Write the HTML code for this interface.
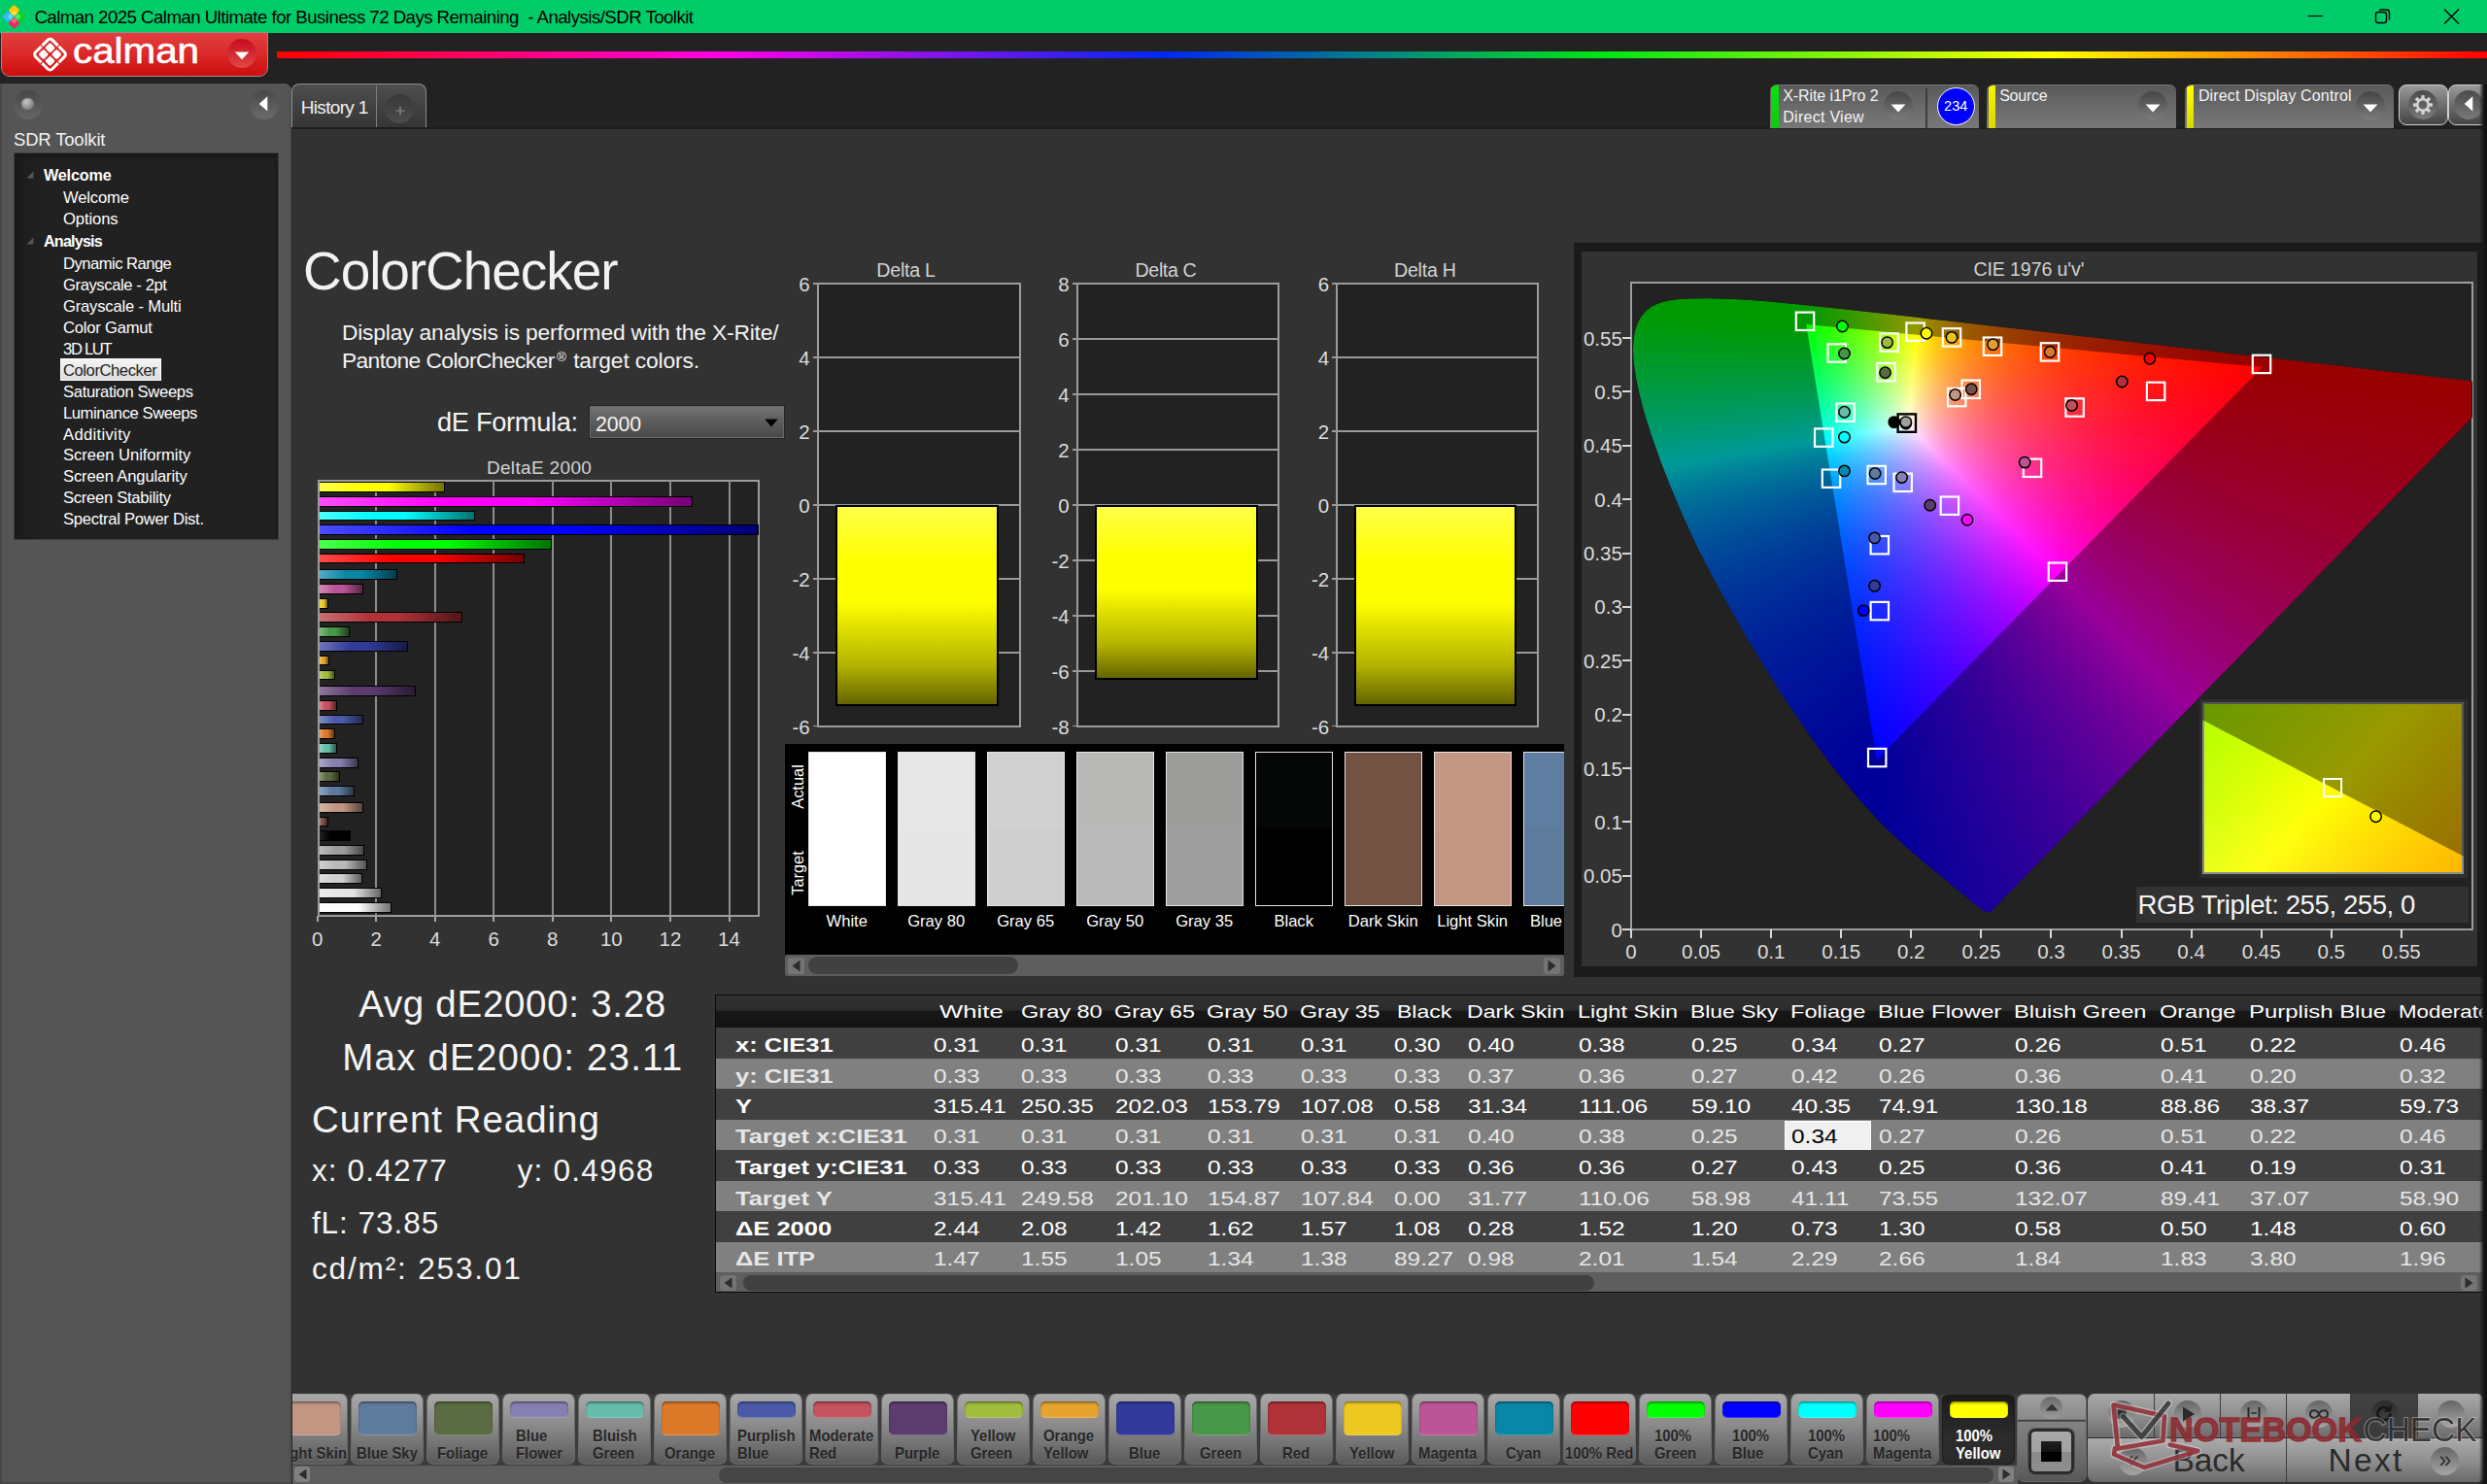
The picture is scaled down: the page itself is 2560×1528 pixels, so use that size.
<!DOCTYPE html>
<html lang="en"><head><meta charset="utf-8"><title>Calman 2025 - Analysis/SDR Toolkit</title>
<style>
html,body{margin:0;padding:0}
body{width:2560px;height:1528px;overflow:hidden;position:relative;background:#323232;font-family:"Liberation Sans",sans-serif;color:#f0f0f0}
span{position:absolute;white-space:nowrap}
div{position:absolute;box-sizing:border-box}
.cie i{position:absolute;left:0;width:100%;height:3px}
</style></head>
<body>
<!-- top -->
<div style="left:0;top:0;width:2560px;height:34px;background:#00cc6a"></div>
<svg style="position:absolute;left:0px;top:3px" width="29" height="29" viewBox="0 0 27 27">
<g stroke-linejoin="round"><rect x="-4" y="-4" width="8" height="8" rx="1.5" transform="translate(13.5,7.2) rotate(45)" fill="#ffc800"/>
<rect x="-4" y="-4" width="8" height="8" rx="1.5" transform="translate(7.3,13.2) rotate(45)" fill="#30b8f8"/>
<rect x="-4" y="-4" width="8" height="8" rx="1.5" transform="translate(19.7,13.2) rotate(45)" fill="#10d020"/>
<rect x="-4" y="-4" width="8" height="8" rx="1.5" transform="translate(13.5,19.4) rotate(45)" fill="#f02860"/>
<rect x="-2.2" y="-2.2" width="4.4" height="4.4" transform="translate(13.5,9.5) rotate(45)" fill="#ffdc50"/>
<rect x="-2.2" y="-2.2" width="4.4" height="4.4" transform="translate(9.8,13.2) rotate(45)" fill="#70d0ff"/>
<rect x="-2.2" y="-2.2" width="4.4" height="4.4" transform="translate(17.2,13.2) rotate(45)" fill="#50e860"/>
<rect x="-2.2" y="-2.2" width="4.4" height="4.4" transform="translate(13.5,17) rotate(45)" fill="#ff6088"/></g></svg>
<span style="left:35.4px;top:7.1px;font-size:18.6px;line-height:22px;letter-spacing:-0.51px;color:#000;white-space:pre;">Calman 2025 Calman Ultimate for Business 72 Days Remaining  - Analysis/SDR Toolkit</span>
<svg style="position:absolute;left:2360px;top:0" width="200" height="34" viewBox="0 0 200 34" fill="none" stroke="#000" stroke-width="1.4">
<path d="M15.5 16.5h15.5" stroke-width="1.15"/><rect x="85.5" y="12.5" width="11" height="11" rx="2.5"/><path d="M89 10h7.5a3 3 0 0 1 3 3v7.5"/><path d="M156 9.5l15 15m0-15l-15 15"/></svg>
<div style="left:0;top:34px;width:2560px;height:99px;background:#222"></div>
<div style="left:1px;top:33px;width:274.5px;height:46px;border-radius:0 0 9px 9px;border:1.3px solid #9a8c8c;background:linear-gradient(#e04040,#dc2828 50%,#cc0e0e)"></div>
<svg style="position:absolute;left:31.2px;top:34.8px" width="41" height="41" viewBox="0 0 38 38"><g transform="translate(19,19.5) rotate(45)"><rect x="-11.3" y="-11.3" width="22.6" height="22.6" rx="3" fill="none" stroke="#fff" stroke-width="2.8"/>
<g fill="#fff"><rect x="-8" y="-8" width="7.1" height="7.1" rx="1.6"/><rect x="0.9" y="-8" width="7.1" height="7.1" rx="1.6"/><rect x="-8" y="0.9" width="7.1" height="7.1" rx="1.6"/><rect x="0.9" y="0.9" width="7.1" height="7.1" rx="1.6"/></g>
<path d="M0 -14v5M0 9v5M-14 0h5M9 0h5" stroke="#d92428" stroke-width="1.1"/></g></svg>
<span style="left:74.5px;top:31.3px;font-size:36px;line-height:43px;transform:scaleX(1.120);transform-origin:0 0;color:#fff;-webkit-text-stroke:0.6px #fff;">calman</span>
<div style="left:234px;top:40px;width:30px;height:30px;border-radius:15px;background:linear-gradient(#c40c1c,#e24848)"></div>
<svg style="position:absolute;left:241px;top:53px" width="16" height="9" viewBox="0 0 16 9"><path d="M0.8 0.5h14.4l-7.2 7.8z" fill="#fff"/></svg>
<div style="left:285px;top:52.8px;width:2275px;height:7.3px;background:linear-gradient(90deg,#f00 0%,#ff00e6 20%,#0028f0 40.2%,#00e614 60%,#ff0 80.2%,#f00 100%)"></div>
<div style="left:0;top:86px;width:300px;height:1442px;background:#555;border-radius:0 7px 0 0;border-left:2px solid #484848;border-bottom:2.5px solid #484848"></div><div style="left:298px;top:94px;width:1px;height:1434px;background:#484848"></div>
<div style="left:13.5px;top:93px;width:30px;height:30px;border-radius:15px;background:linear-gradient(#484848,#666)"></div>
<div style="left:22px;top:100.5px;width:12.5px;height:12.5px;border-radius:7px;background:radial-gradient(circle at 40% 35%,#c8c8c8,#8a8a8a 60%,#666)"></div>
<div style="left:256.5px;top:93px;width:30px;height:30px;border-radius:15px;background:linear-gradient(#484848,#6c6c6c)"></div>
<svg style="position:absolute;left:266px;top:99px" width="10" height="16" viewBox="0 0 10 16"><path d="M9.3 0.3v15.2l-8.6-7.6z" fill="#fff"/></svg>
<span style="left:14.0px;top:133.2px;font-size:18.5px;line-height:22px;letter-spacing:-0.18px;color:#f2f2f2;">SDR Toolkit</span>
<div style="left:14px;top:157px;width:273px;height:399px;background:linear-gradient(90deg,#1b1b1b,#212121 30px);border:1px solid #3e3e3e;box-shadow:inset 0 3px 4px #161616"></div>
<div style="left:61.5px;top:369px;width:104px;height:22.5px;background:linear-gradient(#f4f4f4,#dcdcdc);border:1px solid #fff"></div>
<span style="left:45.0px;top:170.7px;font-size:16.2px;line-height:19px;letter-spacing:-0.19px;color:#fff;font-weight:bold;">Welcome</span>
<span style="left:65.0px;top:193.7px;font-size:16.6px;line-height:20px;letter-spacing:-0.15px;color:#fff;">Welcome</span>
<span style="left:65.0px;top:215.6px;font-size:16.6px;line-height:20px;letter-spacing:-0.10px;color:#fff;">Options</span>
<span style="left:45.0px;top:238.5px;font-size:16.2px;line-height:19px;letter-spacing:-0.83px;color:#fff;font-weight:bold;">Analysis</span>
<span style="left:65.0px;top:261.8px;font-size:16.6px;line-height:20px;letter-spacing:-0.52px;color:#fff;">Dynamic Range</span>
<span style="left:65.0px;top:283.8px;font-size:16.6px;line-height:20px;letter-spacing:-0.40px;color:#fff;">Grayscale - 2pt</span>
<span style="left:65.0px;top:305.8px;font-size:16.6px;line-height:20px;letter-spacing:-0.18px;color:#fff;">Grayscale - Multi</span>
<span style="left:65.0px;top:327.8px;font-size:16.6px;line-height:20px;letter-spacing:-0.21px;color:#fff;">Color Gamut</span>
<span style="left:65.0px;top:349.7px;font-size:16.6px;line-height:20px;letter-spacing:-1.30px;color:#fff;">3D LUT</span>
<span style="left:65.0px;top:371.6px;font-size:16.6px;line-height:20px;letter-spacing:-0.43px;color:#222;">ColorChecker</span>
<span style="left:65.0px;top:393.6px;font-size:16.6px;line-height:20px;letter-spacing:-0.33px;color:#fff;">Saturation Sweeps</span>
<span style="left:65.0px;top:415.5px;font-size:16.6px;line-height:20px;letter-spacing:-0.43px;color:#fff;">Luminance Sweeps</span>
<span style="left:65.0px;top:437.5px;font-size:16.6px;line-height:20px;letter-spacing:0.33px;color:#fff;">Additivity</span>
<span style="left:65.0px;top:459.4px;font-size:16.6px;line-height:20px;letter-spacing:-0.03px;color:#fff;">Screen Uniformity</span>
<span style="left:65.0px;top:481.3px;font-size:16.6px;line-height:20px;letter-spacing:-0.14px;color:#fff;">Screen Angularity</span>
<span style="left:65.0px;top:503.3px;font-size:16.6px;line-height:20px;letter-spacing:-0.28px;color:#fff;">Screen Stability</span>
<span style="left:65.0px;top:525.2px;font-size:16.6px;line-height:20px;letter-spacing:-0.28px;color:#fff;">Spectral Power Dist.</span>
<svg style="position:absolute;left:27px;top:176.0px" width="8" height="8" viewBox="0 0 8 8"><path d="M7.5 0.5v7h-7z" fill="#565656"/></svg>
<svg style="position:absolute;left:27px;top:244.0px" width="8" height="8" viewBox="0 0 8 8"><path d="M7.5 0.5v7h-7z" fill="#565656"/></svg>
<div style="left:300px;top:86px;width:139px;height:47px;border:1.5px solid #8c8c8c;border-bottom:none;border-radius:8px 8px 0 0;background:linear-gradient(#4e4e4e,#343434)"></div>
<div style="left:387px;top:88px;width:1.2px;height:44px;background:#808080"></div>
<span style="left:309.7px;top:98.9px;font-size:19px;line-height:23px;letter-spacing:-0.66px;color:#f0f0f0;">History 1</span>
<div style="left:396px;top:97px;width:30px;height:30px;border-radius:15px;background:linear-gradient(#383838,#4c4c4c)"></div>
<svg style="position:absolute;left:406.5px;top:108.5px" width="10" height="10" viewBox="0 0 10 10"><path d="M5 0.5v9M0.5 5h9" stroke="#8e8e8e" stroke-width="1.2"/></svg>
<div style="left:300px;top:131px;width:2260px;height:1397px;background:#323232;border-top:2px solid #1c1c1c;border-left:1px solid #222"></div>
<div style="left:1821.5px;top:86.5px;width:215.0px;height:45px;border-radius:7px 7px 0 0;background:linear-gradient(#5a5a5a,#6a6a6a 50%,#787878);border-top:1px solid #757575;overflow:hidden"><div style="left:1.5px;top:0;width:7.5px;height:45px;background:linear-gradient(#0ce00c,#10c810)"></div></div>
<span style="left:1835.3px;top:88.9px;font-size:16px;line-height:19px;letter-spacing:-0.10px;color:#f4f4f4;">X-Rite i1Pro 2</span>
<span style="left:1835.3px;top:110.6px;font-size:16px;line-height:19px;letter-spacing:0.27px;color:#f4f4f4;">Direct View</span>
<div style="left:1938.5px;top:94px;width:30px;height:30px;border-radius:15px;background:linear-gradient(#454545,#7c7c7c)"></div><svg style="position:absolute;left:1945.5px;top:107px" width="16" height="9" viewBox="0 0 16 9"><path d="M0.6 0.4h14.8l-7.4 8z" fill="#fff"/></svg>
<div style="left:1982px;top:91px;width:1.5px;height:41px;background:#3c3c3c"></div>
<div style="left:1993.5px;top:89.5px;width:39px;height:39px;border-radius:20px;background:#0000fe;border:1.5px solid #fff"></div>
<span style="left:2001.1px;top:100.7px;font-size:14.5px;line-height:17px;color:#fff;">234</span>
<div style="left:2045px;top:86.5px;width:195px;height:45px;border-radius:7px 7px 0 0;background:linear-gradient(#5a5a5a,#6a6a6a 50%,#787878);border-top:1px solid #757575;overflow:hidden"><div style="left:1.5px;top:0;width:7.5px;height:45px;background:linear-gradient(#f4f400,#d8d800)"></div></div>
<span style="left:2058.2px;top:88.9px;font-size:16px;line-height:19px;letter-spacing:-0.26px;color:#f4f4f4;">Source</span>
<div style="left:2200.8px;top:94px;width:30px;height:30px;border-radius:15px;background:linear-gradient(#454545,#7c7c7c)"></div><svg style="position:absolute;left:2207.8px;top:107px" width="16" height="9" viewBox="0 0 16 9"><path d="M0.6 0.4h14.8l-7.4 8z" fill="#fff"/></svg>
<div style="left:2249px;top:86.5px;width:215px;height:45px;border-radius:7px 7px 0 0;background:linear-gradient(#5a5a5a,#6a6a6a 50%,#787878);border-top:1px solid #757575;overflow:hidden"><div style="left:1.5px;top:0;width:7.5px;height:45px;background:linear-gradient(#ff0,#d8d800)"></div></div>
<span style="left:2262.9px;top:88.8px;font-size:16px;line-height:19px;letter-spacing:0.14px;color:#f4f4f4;">Direct Display Control</span>
<div style="left:2425.1px;top:94px;width:30px;height:30px;border-radius:15px;background:linear-gradient(#454545,#7c7c7c)"></div><svg style="position:absolute;left:2432.1px;top:107px" width="16" height="9" viewBox="0 0 16 9"><path d="M0.6 0.4h14.8l-7.4 8z" fill="#fff"/></svg>
<div style="left:2468.5px;top:86.5px;width:51px;height:42px;border-radius:8px;border:1.5px solid #cfcfcf;background:linear-gradient(#9a9a9a,#6e6e6e 50%,#444)"></div>
<div style="left:2519.5px;top:86.5px;width:51px;height:42px;border-radius:8px;border:1.5px solid #cfcfcf;background:linear-gradient(#9a9a9a,#6e6e6e 50%,#444)"></div>
<div style="left:2479px;top:93px;width:30px;height:30px;border-radius:15px;background:linear-gradient(#4a4a4a,#7a7a7a)"></div>
<div style="left:2525.5px;top:93px;width:30px;height:30px;border-radius:15px;background:linear-gradient(#4a4a4a,#7a7a7a)"></div>
<svg style="position:absolute;left:2482px;top:96px" width="24" height="24" viewBox="-12 -12 24 24"><g fill="#d4d4d4"><rect x="-1.7" y="-10" width="3.4" height="4.2" rx="0.7" transform="rotate(0)"/><rect x="-1.7" y="-10" width="3.4" height="4.2" rx="0.7" transform="rotate(45)"/><rect x="-1.7" y="-10" width="3.4" height="4.2" rx="0.7" transform="rotate(90)"/><rect x="-1.7" y="-10" width="3.4" height="4.2" rx="0.7" transform="rotate(135)"/><rect x="-1.7" y="-10" width="3.4" height="4.2" rx="0.7" transform="rotate(180)"/><rect x="-1.7" y="-10" width="3.4" height="4.2" rx="0.7" transform="rotate(225)"/><rect x="-1.7" y="-10" width="3.4" height="4.2" rx="0.7" transform="rotate(270)"/><rect x="-1.7" y="-10" width="3.4" height="4.2" rx="0.7" transform="rotate(315)"/></g><circle r="5.7" fill="none" stroke="#d4d4d4" stroke-width="2.5"/></svg>
<svg style="position:absolute;left:2535.5px;top:99px" width="10" height="16" viewBox="0 0 10 16"><path d="M9.3 0.3v15.2l-8.6-7.6z" fill="#fff"/></svg>
<!-- mid -->
<span style="left:312.0px;top:245.9px;font-size:55px;line-height:66px;letter-spacing:-1.07px;color:#f2f2f2;">ColorChecker</span>
<span style="left:351.9px;top:328.8px;font-size:22.8px;line-height:27px;letter-spacing:-0.17px;color:#f4f4f4;">Display analysis is performed with the X-Rite/</span>
<span style="left:351.9px;top:358.1px;font-size:22.8px;line-height:27px;letter-spacing:-0.59px;color:#f4f4f4;">Pantone ColorChecker</span>
<span style="left:573.0px;top:359.8px;font-size:13.5px;line-height:16px;color:#f4f4f4;">®</span>
<span style="left:584.0px;top:358.1px;font-size:22.8px;line-height:27px;letter-spacing:-0.15px;color:#f4f4f4;white-space:pre;"> target colors.</span>
<span style="left:450.0px;top:418.3px;font-size:27.3px;line-height:33px;letter-spacing:-0.35px;color:#f4f4f4;">dE Formula:</span>
<div style="left:606px;top:416.5px;width:202px;height:35px;border:1.5px solid #262626;background:linear-gradient(#747474,#5c5c5c 50%,#484848);box-shadow:inset 0 0 0 1px #6a6a6a"></div>
<span style="left:613.0px;top:423.9px;font-size:21.3px;line-height:26px;letter-spacing:-0.13px;color:#f4f4f4;">2000</span>
<svg style="position:absolute;left:787px;top:430.5px" width="14" height="9" viewBox="0 0 14 9"><path d="M0.3 0.5h13.4l-6.7 8z" fill="#000"/></svg>
<span style="left:500.9px;top:469.5px;font-size:19px;line-height:23px;letter-spacing:0.34px;color:#d2d2d2;">DeltaE 2000</span>
<div style="left:327px;top:494px;width:455px;height:450px;background:#222;border:2px solid #9c9c9c"></div>
<div style="left:386.2px;top:495px;width:2px;height:448px;background:#8c8c8c"></div><div style="left:446.7px;top:495px;width:2px;height:448px;background:#8c8c8c"></div><div style="left:507.2px;top:495px;width:2px;height:448px;background:#8c8c8c"></div><div style="left:567.8px;top:495px;width:2px;height:448px;background:#8c8c8c"></div><div style="left:628.4px;top:495px;width:2px;height:448px;background:#8c8c8c"></div><div style="left:688.9px;top:495px;width:2px;height:448px;background:#8c8c8c"></div><div style="left:749.5px;top:495px;width:2px;height:448px;background:#8c8c8c"></div>
<div style="left:325.6px;top:943px;width:2px;height:6px;background:#a8a8a8"></div>
<span style="left:320.9px;top:953.8px;font-size:20.5px;line-height:25px;color:#dcdcdc;">0</span>
<div style="left:386.2px;top:943px;width:2px;height:6px;background:#a8a8a8"></div>
<span style="left:381.4px;top:953.8px;font-size:20.5px;line-height:25px;color:#dcdcdc;">2</span>
<div style="left:446.7px;top:943px;width:2px;height:6px;background:#a8a8a8"></div>
<span style="left:442.0px;top:953.8px;font-size:20.5px;line-height:25px;color:#dcdcdc;">4</span>
<div style="left:507.2px;top:943px;width:2px;height:6px;background:#a8a8a8"></div>
<span style="left:502.5px;top:953.8px;font-size:20.5px;line-height:25px;color:#dcdcdc;">6</span>
<div style="left:567.8px;top:943px;width:2px;height:6px;background:#a8a8a8"></div>
<span style="left:563.1px;top:953.8px;font-size:20.5px;line-height:25px;color:#dcdcdc;">8</span>
<div style="left:628.4px;top:943px;width:2px;height:6px;background:#a8a8a8"></div>
<span style="left:617.9px;top:953.8px;font-size:20.5px;line-height:25px;color:#dcdcdc;">10</span>
<div style="left:688.9px;top:943px;width:2px;height:6px;background:#a8a8a8"></div>
<span style="left:678.5px;top:953.8px;font-size:20.5px;line-height:25px;color:#dcdcdc;">12</span>
<div style="left:749.5px;top:943px;width:2px;height:6px;background:#a8a8a8"></div>
<span style="left:739.0px;top:953.8px;font-size:20.5px;line-height:25px;color:#dcdcdc;">14</span>
<div style="left:329px;top:496.0px;width:128.9px;height:10.8px;border:1.8px solid #000;border-left:none;background:linear-gradient(90deg,#ffff4c,#ffff00 35%,#ffff00 55%,#737300)"></div><div style="left:329px;top:511.0px;width:383.6px;height:10.8px;border:1.8px solid #000;border-left:none;background:linear-gradient(90deg,#ff4cff,#ff00ff 35%,#ff00ff 55%,#730073)"></div><div style="left:329px;top:525.6px;width:159.7px;height:10.8px;border:1.8px solid #000;border-left:none;background:linear-gradient(90deg,#4cffff,#00ffff 35%,#00ffff 55%,#007373)"></div><div style="background-size:455px 100%;left:329px;top:540.3px;width:452.0px;height:10.8px;border:1.8px solid #000;border-left:none;background:linear-gradient(90deg,#4c4cff,#0000ff 35%,#0000ff 55%,#000073)"></div><div style="left:329px;top:555.0px;width:238.9px;height:10.8px;border:1.8px solid #000;border-left:none;background:linear-gradient(90deg,#4cff4c,#00ff00 35%,#00ff00 55%,#007300)"></div><div style="left:329px;top:569.6px;width:210.6px;height:10.8px;border:1.8px solid #000;border-left:none;background:linear-gradient(90deg,#ff4c4c,#ff0000 35%,#ff0000 55%,#730000)"></div><div style="left:329px;top:586.4px;width:79.8px;height:10.8px;border:1.8px solid #000;border-left:none;background:linear-gradient(90deg,#52abc1,#0887a6 35%,#0887a6 55%,#043d4b)"></div><div style="left:329px;top:601.0px;width:44.8px;height:10.8px;border:1.8px solid #000;border-left:none;background:linear-gradient(90deg,#d088b6,#bc5597 35%,#bc5597 55%,#552644)"></div><div style="left:329px;top:616.0px;width:8.6px;height:10.8px;border:1.8px solid #000;border-left:none;background:linear-gradient(90deg,#f2d863,#ecc820 35%,#ecc820 55%,#6a5a0e)"></div><div style="left:329px;top:630.3px;width:146.7px;height:10.8px;border:1.8px solid #000;border-left:none;background:linear-gradient(90deg,#c87074,#b03239 35%,#b03239 55%,#4f161a)"></div><div style="left:329px;top:645.3px;width:30.9px;height:10.8px;border:1.8px solid #000;border-left:none;background:linear-gradient(90deg,#7fb67f,#489648 35%,#489648 55%,#204420)"></div><div style="left:329px;top:660.0px;width:91.2px;height:10.8px;border:1.8px solid #000;border-left:none;background:linear-gradient(90deg,#7075b8,#323a9a 35%,#323a9a 55%,#161a45)"></div><div style="left:329px;top:674.6px;width:9.8px;height:10.8px;border:1.8px solid #000;border-left:none;background:linear-gradient(90deg,#eebf6d,#e6a42e 35%,#e6a42e 55%,#674a15)"></div><div style="left:329px;top:689.6px;width:15.9px;height:10.8px;border:1.8px solid #000;border-left:none;background:linear-gradient(90deg,#bcd178,#a0bd3e 35%,#a0bd3e 55%,#48551c)"></div><div style="left:329px;top:706.0px;width:98.8px;height:10.8px;border:1.8px solid #000;border-left:none;background:linear-gradient(90deg,#8d769a,#5c3c6e 35%,#5c3c6e 55%,#291b31)"></div><div style="left:329px;top:721.0px;width:17.7px;height:10.8px;border:1.8px solid #000;border-left:none;background:linear-gradient(90deg,#d6868f,#c4525f 35%,#c4525f 55%,#58252b)"></div><div style="left:329px;top:735.6px;width:44.8px;height:10.8px;border:1.8px solid #000;border-left:none;background:linear-gradient(90deg,#808cc2,#4a5aa8 35%,#4a5aa8 55%,#21284c)"></div><div style="left:329px;top:750.3px;width:15.9px;height:10.8px;border:1.8px solid #000;border-left:none;background:linear-gradient(90deg,#e6a26a,#dc7a2a 35%,#dc7a2a 55%,#633713)"></div><div style="left:329px;top:765.0px;width:17.7px;height:10.8px;border:1.8px solid #000;border-left:none;background:linear-gradient(90deg,#92d0c3,#64bca9 35%,#64bca9 55%,#2d554c)"></div><div style="left:329px;top:780.0px;width:40.0px;height:10.8px;border:1.8px solid #000;border-left:none;background:linear-gradient(90deg,#aaa6c8,#8580b1 35%,#8580b1 55%,#3c3a50)"></div><div style="left:329px;top:794.2px;width:20.7px;height:10.8px;border:1.8px solid #000;border-left:none;background:linear-gradient(90deg,#8c987b,#5a6c42 35%,#5a6c42 55%,#28311e)"></div><div style="left:329px;top:809.2px;width:35.8px;height:10.8px;border:1.8px solid #000;border-left:none;background:linear-gradient(90deg,#8ea3bb,#5e7b9e 35%,#5e7b9e 55%,#2a3747)"></div><div style="left:329px;top:826.0px;width:44.8px;height:10.8px;border:1.8px solid #000;border-left:none;background:linear-gradient(90deg,#d4b6a8,#c29682 35%,#c29682 55%,#57443a)"></div><div style="left:329px;top:840.6px;width:8.9px;height:10.8px;border:1.8px solid #000;border-left:none;background:linear-gradient(90deg,#9d867c,#735244 35%,#735244 55%,#34251f)"></div><div style="left:329px;top:855.0px;width:31.8px;height:10.8px;border:1.8px solid #000;border-left:none;background:linear-gradient(90deg,#222,#000 35%,#000 55%,#000)"></div><div style="left:329px;top:870.0px;width:46.0px;height:10.8px;border:1.8px solid #000;border-left:none;background:linear-gradient(90deg,#bababa,#9d9d9d 35%,#9d9d9d 55%,#474747)"></div><div style="left:329px;top:885.0px;width:49.0px;height:10.8px;border:1.8px solid #000;border-left:none;background:linear-gradient(90deg,#cecece,#b9b9b9 35%,#b9b9b9 55%,#535353)"></div><div style="left:329px;top:899.2px;width:43.6px;height:10.8px;border:1.8px solid #000;border-left:none;background:linear-gradient(90deg,#dddddd,#cfcfcf 35%,#cfcfcf 55%,#5d5d5d)"></div><div style="left:329px;top:913.9px;width:63.5px;height:10.8px;border:1.8px solid #000;border-left:none;background:linear-gradient(90deg,#ececec,#e4e4e4 35%,#e4e4e4 55%,#676767)"></div><div style="left:329px;top:928.9px;width:74.3px;height:10.8px;border:1.8px solid #000;border-left:none;background:linear-gradient(90deg,#ffffff,#ffffff 35%,#ffffff 55%,#737373)"></div>
<div style="left:841px;top:291px;width:209.5px;height:457.6px;background:#222;border:2px solid #9c9c9c"></div><span style="left:902.3px;top:266.2px;font-size:19.6px;line-height:24px;letter-spacing:-0.23px;color:#d2d2d2;">Delta L</span><div style="left:837px;top:291.2px;width:6px;height:1.7px;background:#9a9a9a"></div><span style="left:822.3px;top:280.3px;font-size:20.5px;line-height:25px;color:#dcdcdc;">6</span><div style="left:837px;top:367.1px;width:212.5px;height:1.7px;background:#9a9a9a"></div><span style="left:822.3px;top:356.2px;font-size:20.5px;line-height:25px;color:#dcdcdc;">4</span><div style="left:837px;top:443.1px;width:212.5px;height:1.7px;background:#9a9a9a"></div><span style="left:822.3px;top:432.2px;font-size:20.5px;line-height:25px;color:#dcdcdc;">2</span><div style="left:837px;top:519.0px;width:212.5px;height:1.7px;background:#9a9a9a"></div><span style="left:822.3px;top:508.1px;font-size:20.5px;line-height:25px;color:#dcdcdc;">0</span><div style="left:837px;top:594.9px;width:212.5px;height:1.7px;background:#9a9a9a"></div><span style="left:815.5px;top:584.0px;font-size:20.5px;line-height:25px;color:#dcdcdc;">-2</span><div style="left:837px;top:670.9px;width:212.5px;height:1.7px;background:#9a9a9a"></div><span style="left:815.5px;top:660.0px;font-size:20.5px;line-height:25px;color:#dcdcdc;">-4</span><div style="left:837px;top:746.8px;width:6px;height:1.7px;background:#9a9a9a"></div><span style="left:815.5px;top:735.9px;font-size:20.5px;line-height:25px;color:#dcdcdc;">-6</span><div style="left:860px;top:519.5px;width:167.5px;height:207.0px;border:2px solid #000;background:linear-gradient(#ffff48,#ff0 28%,#ff0 48%,#b4b400 80%,#646400)"></div>
<div style="left:1108px;top:291px;width:209.0px;height:457.6px;background:#222;border:2px solid #9c9c9c"></div><span style="left:1168.6px;top:266.2px;font-size:19.6px;line-height:24px;letter-spacing:-0.38px;color:#d2d2d2;">Delta C</span><div style="left:1104px;top:291.2px;width:6px;height:1.7px;background:#9a9a9a"></div><span style="left:1089.3px;top:280.3px;font-size:20.5px;line-height:25px;color:#dcdcdc;">8</span><div style="left:1104px;top:348.1px;width:212.0px;height:1.7px;background:#9a9a9a"></div><span style="left:1089.3px;top:337.2px;font-size:20.5px;line-height:25px;color:#dcdcdc;">6</span><div style="left:1104px;top:405.1px;width:212.0px;height:1.7px;background:#9a9a9a"></div><span style="left:1089.3px;top:394.2px;font-size:20.5px;line-height:25px;color:#dcdcdc;">4</span><div style="left:1104px;top:462.1px;width:212.0px;height:1.7px;background:#9a9a9a"></div><span style="left:1089.3px;top:451.1px;font-size:20.5px;line-height:25px;color:#dcdcdc;">2</span><div style="left:1104px;top:519.0px;width:212.0px;height:1.7px;background:#9a9a9a"></div><span style="left:1089.3px;top:508.1px;font-size:20.5px;line-height:25px;color:#dcdcdc;">0</span><div style="left:1104px;top:576.0px;width:212.0px;height:1.7px;background:#9a9a9a"></div><span style="left:1082.5px;top:565.0px;font-size:20.5px;line-height:25px;color:#dcdcdc;">-2</span><div style="left:1104px;top:632.9px;width:212.0px;height:1.7px;background:#9a9a9a"></div><span style="left:1082.5px;top:622.0px;font-size:20.5px;line-height:25px;color:#dcdcdc;">-4</span><div style="left:1104px;top:689.9px;width:212.0px;height:1.7px;background:#9a9a9a"></div><span style="left:1082.5px;top:678.9px;font-size:20.5px;line-height:25px;color:#dcdcdc;">-6</span><div style="left:1104px;top:746.8px;width:6px;height:1.7px;background:#9a9a9a"></div><span style="left:1082.5px;top:735.9px;font-size:20.5px;line-height:25px;color:#dcdcdc;">-8</span><div style="left:1127px;top:519.5px;width:167.5px;height:180.0px;border:2px solid #000;background:linear-gradient(#ffff48,#ff0 28%,#ff0 48%,#b4b400 80%,#646400)"></div>
<div style="left:1375.4px;top:291px;width:208.6px;height:457.6px;background:#222;border:2px solid #9c9c9c"></div><span style="left:1435.0px;top:266.2px;font-size:19.6px;line-height:24px;letter-spacing:-0.23px;color:#d2d2d2;">Delta H</span><div style="left:1371.4px;top:291.2px;width:6px;height:1.7px;background:#9a9a9a"></div><span style="left:1356.7px;top:280.3px;font-size:20.5px;line-height:25px;color:#dcdcdc;">6</span><div style="left:1371.4px;top:367.1px;width:211.6px;height:1.7px;background:#9a9a9a"></div><span style="left:1356.7px;top:356.2px;font-size:20.5px;line-height:25px;color:#dcdcdc;">4</span><div style="left:1371.4px;top:443.1px;width:211.6px;height:1.7px;background:#9a9a9a"></div><span style="left:1356.7px;top:432.2px;font-size:20.5px;line-height:25px;color:#dcdcdc;">2</span><div style="left:1371.4px;top:519.0px;width:211.6px;height:1.7px;background:#9a9a9a"></div><span style="left:1356.7px;top:508.1px;font-size:20.5px;line-height:25px;color:#dcdcdc;">0</span><div style="left:1371.4px;top:594.9px;width:211.6px;height:1.7px;background:#9a9a9a"></div><span style="left:1349.9px;top:584.0px;font-size:20.5px;line-height:25px;color:#dcdcdc;">-2</span><div style="left:1371.4px;top:670.9px;width:211.6px;height:1.7px;background:#9a9a9a"></div><span style="left:1349.9px;top:660.0px;font-size:20.5px;line-height:25px;color:#dcdcdc;">-4</span><div style="left:1371.4px;top:746.8px;width:6px;height:1.7px;background:#9a9a9a"></div><span style="left:1349.9px;top:735.9px;font-size:20.5px;line-height:25px;color:#dcdcdc;">-6</span><div style="left:1394px;top:519.5px;width:167.0px;height:207.0px;border:2px solid #000;background:linear-gradient(#ffff48,#ff0 28%,#ff0 48%,#b4b400 80%,#646400)"></div>
<div style="left:808px;top:766px;width:801.5px;height:217px;background:#000;overflow:hidden">
<div style="left:24px;top:8px;width:79.5px;height:159px;border:1.5px solid #e4e4e4;background:linear-gradient(#ffffff 50%,#ffffff 50%)"></div>
<span style="left:42.5px;top:172.5px;font-size:16.6px;line-height:20px;color:#fff;">White</span>
<div style="left:116px;top:8px;width:79.5px;height:159px;border:1.5px solid #e4e4e4;background:linear-gradient(#e6e7e6 50%,#e6e6e6 50%)"></div>
<span style="left:126.2px;top:172.5px;font-size:16.6px;line-height:20px;color:#fff;">Gray 80</span>
<div style="left:208px;top:8px;width:79.5px;height:159px;border:1.5px solid #e4e4e4;background:linear-gradient(#d0d1d0 50%,#cfcfcf 50%)"></div>
<span style="left:218.2px;top:172.5px;font-size:16.6px;line-height:20px;color:#fff;">Gray 65</span>
<div style="left:300px;top:8px;width:79.5px;height:159px;border:1.5px solid #e4e4e4;background:linear-gradient(#b9bab7 50%,#bababa 50%)"></div>
<span style="left:310.2px;top:172.5px;font-size:16.6px;line-height:20px;color:#fff;">Gray 50</span>
<div style="left:392px;top:8px;width:79.5px;height:159px;border:1.5px solid #e4e4e4;background:linear-gradient(#9d9e9b 50%,#9e9e9e 50%)"></div>
<span style="left:402.2px;top:172.5px;font-size:16.6px;line-height:20px;color:#fff;">Gray 35</span>
<div style="left:484px;top:8px;width:79.5px;height:159px;border:1.5px solid #e4e4e4;background:linear-gradient(#050706 50%,#000000 50%)"></div>
<span style="left:503.4px;top:172.5px;font-size:16.6px;line-height:20px;color:#fff;">Black</span>
<div style="left:576px;top:8px;width:79.5px;height:159px;border:1.5px solid #e4e4e4;background:linear-gradient(#735244 50%,#735244 50%)"></div>
<span style="left:579.7px;top:172.5px;font-size:16.6px;line-height:20px;color:#fff;">Dark Skin</span>
<div style="left:668px;top:8px;width:79.5px;height:159px;border:1.5px solid #e4e4e4;background:linear-gradient(#c39783 50%,#c29682 50%)"></div>
<span style="left:671.2px;top:172.5px;font-size:16.6px;line-height:20px;color:#fff;">Light Skin</span>
<div style="left:760px;top:8px;width:79.5px;height:159px;border:1.5px solid #e4e4e4;background:linear-gradient(#5e7da1 50%,#5e7b9e 50%)"></div>
<span style="left:766.9px;top:172.5px;font-size:16.6px;line-height:20px;color:#fff;">Blue Sky</span>
<span style="left:12.5px;top:43.5px;font-size:16.4px;line-height:20px;color:#fff;transform:translate(-50%,-50%) rotate(-90deg)">Actual</span>
<span style="left:12.5px;top:132.5px;font-size:16.4px;line-height:20px;color:#fff;transform:translate(-50%,-50%) rotate(-90deg)">Target</span>
</div>
<div style="left:808px;top:983px;width:801.5px;height:22px;background:#5e5e5e;border-radius:3px"></div>
<div style="left:831.5px;top:985px;width:216px;height:18px;background:#414141;border-radius:9px"></div>
<div style="left:811px;top:986px;width:17px;height:17px;background:#747474;border-radius:3px"></div><div style="left:1588.5px;top:986px;width:17px;height:17px;background:#747474;border-radius:3px"></div>
<svg style="position:absolute;left:815px;top:988px" width="9" height="13" viewBox="0 0 9 13"><path d="M8.5 0.5v12l-8-6z" fill="#2c2c2c"/></svg>
<svg style="position:absolute;left:1593px;top:988px" width="9" height="13" viewBox="0 0 9 13"><path d="M0.5 0.5v12l8-6z" fill="#2c2c2c"/></svg>
<!-- cie -->
<div style="left:1619.5px;top:250px;width:941px;height:755.5px;background:#1a1a1a"></div>
<div style="left:1628px;top:259px;width:922px;height:736px;background:#323232"></div>
<span style="left:2031.4px;top:265.2px;font-size:19.6px;line-height:24px;letter-spacing:-0.11px;color:#d2d2d2;">CIE 1976 u'v'</span>
<div style="left:1678.0px;top:289.9px;width:868.1999999999998px;height:668.0px;background:#222;border:2px solid #9c9c9c"></div>
<div style="left:1678.0px;top:956.9px;width:2px;height:9px;background:#d8d8d8"></div>
<span style="left:1673.3px;top:966.6px;font-size:20.5px;line-height:25px;color:#dcdcdc;">0</span>
<div style="left:1670.0px;top:956.1px;width:9px;height:2px;background:#d8d8d8"></div>
<span style="left:1658.4px;top:944.7px;font-size:20.5px;line-height:25px;color:#dcdcdc;">0</span>
<div style="left:1750.1px;top:956.9px;width:2px;height:9px;background:#d8d8d8"></div>
<span style="left:1731.1px;top:966.6px;font-size:20.5px;line-height:25px;color:#dcdcdc;">0.05</span>
<div style="left:1670.0px;top:900.7px;width:9px;height:2px;background:#d8d8d8"></div>
<span style="left:1629.9px;top:889.3px;font-size:20.5px;line-height:25px;color:#dcdcdc;">0.05</span>
<div style="left:1822.1px;top:956.9px;width:2px;height:9px;background:#d8d8d8"></div>
<span style="left:1808.9px;top:966.6px;font-size:20.5px;line-height:25px;color:#dcdcdc;">0.1</span>
<div style="left:1670.0px;top:845.4px;width:9px;height:2px;background:#d8d8d8"></div>
<span style="left:1641.3px;top:833.9px;font-size:20.5px;line-height:25px;color:#dcdcdc;">0.1</span>
<div style="left:1894.2px;top:956.9px;width:2px;height:9px;background:#d8d8d8"></div>
<span style="left:1875.3px;top:966.6px;font-size:20.5px;line-height:25px;color:#dcdcdc;">0.15</span>
<div style="left:1670.0px;top:790.0px;width:9px;height:2px;background:#d8d8d8"></div>
<span style="left:1629.9px;top:778.6px;font-size:20.5px;line-height:25px;color:#dcdcdc;">0.15</span>
<div style="left:1966.3px;top:956.9px;width:2px;height:9px;background:#d8d8d8"></div>
<span style="left:1953.0px;top:966.6px;font-size:20.5px;line-height:25px;color:#dcdcdc;">0.2</span>
<div style="left:1670.0px;top:734.6px;width:9px;height:2px;background:#d8d8d8"></div>
<span style="left:1641.3px;top:723.2px;font-size:20.5px;line-height:25px;color:#dcdcdc;">0.2</span>
<div style="left:2038.3px;top:956.9px;width:2px;height:9px;background:#d8d8d8"></div>
<span style="left:2019.4px;top:966.6px;font-size:20.5px;line-height:25px;color:#dcdcdc;">0.25</span>
<div style="left:1670.0px;top:679.2px;width:9px;height:2px;background:#d8d8d8"></div>
<span style="left:1629.9px;top:667.8px;font-size:20.5px;line-height:25px;color:#dcdcdc;">0.25</span>
<div style="left:2110.4px;top:956.9px;width:2px;height:9px;background:#d8d8d8"></div>
<span style="left:2097.2px;top:966.6px;font-size:20.5px;line-height:25px;color:#dcdcdc;">0.3</span>
<div style="left:1670.0px;top:623.8px;width:9px;height:2px;background:#d8d8d8"></div>
<span style="left:1641.3px;top:612.4px;font-size:20.5px;line-height:25px;color:#dcdcdc;">0.3</span>
<div style="left:2182.5px;top:956.9px;width:2px;height:9px;background:#d8d8d8"></div>
<span style="left:2163.5px;top:966.6px;font-size:20.5px;line-height:25px;color:#dcdcdc;">0.35</span>
<div style="left:1670.0px;top:568.5px;width:9px;height:2px;background:#d8d8d8"></div>
<span style="left:1629.9px;top:557.1px;font-size:20.5px;line-height:25px;color:#dcdcdc;">0.35</span>
<div style="left:2254.6px;top:956.9px;width:2px;height:9px;background:#d8d8d8"></div>
<span style="left:2241.3px;top:966.6px;font-size:20.5px;line-height:25px;color:#dcdcdc;">0.4</span>
<div style="left:1670.0px;top:513.1px;width:9px;height:2px;background:#d8d8d8"></div>
<span style="left:1641.3px;top:501.7px;font-size:20.5px;line-height:25px;color:#dcdcdc;">0.4</span>
<div style="left:2326.6px;top:956.9px;width:2px;height:9px;background:#d8d8d8"></div>
<span style="left:2307.7px;top:966.6px;font-size:20.5px;line-height:25px;color:#dcdcdc;">0.45</span>
<div style="left:1670.0px;top:457.7px;width:9px;height:2px;background:#d8d8d8"></div>
<span style="left:1629.9px;top:446.3px;font-size:20.5px;line-height:25px;color:#dcdcdc;">0.45</span>
<div style="left:2398.7px;top:956.9px;width:2px;height:9px;background:#d8d8d8"></div>
<span style="left:2385.5px;top:966.6px;font-size:20.5px;line-height:25px;color:#dcdcdc;">0.5</span>
<div style="left:1670.0px;top:402.4px;width:9px;height:2px;background:#d8d8d8"></div>
<span style="left:1641.3px;top:390.9px;font-size:20.5px;line-height:25px;color:#dcdcdc;">0.5</span>
<div style="left:2470.8px;top:956.9px;width:2px;height:9px;background:#d8d8d8"></div>
<span style="left:2451.8px;top:966.6px;font-size:20.5px;line-height:25px;color:#dcdcdc;">0.55</span>
<div style="left:1670.0px;top:347.0px;width:9px;height:2px;background:#d8d8d8"></div>
<span style="left:1629.9px;top:335.6px;font-size:20.5px;line-height:25px;color:#dcdcdc;">0.55</span>
<div class="cie" style="left:1679.0px;top:291px;width:866px;height:666px;overflow:hidden"><div style="left:0;top:0;width:866px;height:666px;clip-path:path('M370.2 647.9L370.1 647.8L370.0 647.8L369.9 647.9L369.8 648.0L369.6 648.0L369.3 648.0L369.1 647.9L368.9 648.1L368.8 648.3L368.7 648.5L368.5 648.5L368.1 648.5L367.7 648.5L367.3 648.5L366.8 648.5L366.4 648.5L365.9 648.4L365.3 648.3L364.6 648.0L363.5 647.4L362.2 646.6L360.7 645.5L358.9 644.3L357.0 642.8L354.7 641.0L352.1 639.0L349.1 636.6L345.9 633.9L342.3 630.8L338.4 627.5L334.1 623.9L329.3 619.9L323.9 615.5L318.0 610.6L311.5 605.2L304.5 599.5L297.0 593.2L288.8 586.2L280.0 578.4L270.5 569.6L260.4 559.9L249.5 548.6L237.2 535.0L223.2 518.3L207.7 498.9L191.4 477.1L174.2 452.8L156.2 425.9L137.9 396.8L119.4 366.2L101.1 334.6L83.5 302.6L67.3 270.7L53.1 239.7L40.6 210.2L29.8 182.5L20.9 157.3L13.8 134.9L8.6 115.1L5.0 97.9L2.8 83.0L2.0 70.2L2.4 59.2L4.0 49.7L6.7 41.6L10.4 34.9L15.1 29.4L20.5 25.1L26.7 22.0L33.3 19.7L40.5 18.2L48.0 17.3L55.9 16.7L64.0 16.4L72.2 16.3L80.3 16.3L88.6 16.4L96.9 16.7L105.4 17.0L114.2 17.5L123.2 18.1L132.5 18.8L142.2 19.6L152.1 20.5L162.4 21.5L173.2 22.5L184.4 23.7L196.0 24.9L208.1 26.2L220.7 27.5L233.8 29.0L247.5 30.5L261.7 32.1L276.6 33.8L292.0 35.5L308.0 37.4L324.6 39.3L341.9 41.2L359.7 43.3L378.1 45.4L397.1 47.6L416.6 49.8L436.6 52.1L457.0 54.5L477.8 56.8L498.9 59.3L520.1 61.7L540.9 64.1L561.4 66.5L581.6 68.8L601.8 71.1L621.6 73.4L640.7 75.6L658.9 77.6L676.2 79.6L692.8 81.5L708.4 83.3L723.2 85.0L737.0 86.6L749.8 88.1L761.8 89.4L773.0 90.7L783.3 91.9L793.0 93.0L802.1 94.1L810.8 95.1L819.0 96.0L826.6 96.9L833.7 97.7L840.4 98.5L846.5 99.2L852.1 99.8L857.1 100.4L861.6 100.9L865.5 101.4L869.2 101.8L872.5 102.2L875.5 102.5L878.1 102.8L880.4 103.1L882.3 103.3L883.9 103.5L885.4 103.6L886.8 103.8L888.1 104.0L889.3 104.1L890.4 104.2L891.4 104.3L892.5 104.5L893.6 104.6L894.6 104.7L895.6 104.8L896.4 104.9L897.0 105.0L897.4 105.0L897.7 105.1L898.0 105.1L898.3 105.1L898.5 105.1L898.5 105.2L898.5 105.2Z')">
<i style="top:15px;background:linear-gradient(90deg,#0f0 32px,#0f0 136px)"></i><i style="top:18px;background:linear-gradient(90deg,#0f0 22px,#0f0 170px)"></i><i style="top:21px;background:linear-gradient(90deg,#0f0 18px,#0f0 176px,#24ff00 198px)"></i><i style="top:24px;background:linear-gradient(90deg,#0f0 14px,#0f0 176px,#1dff00 194px,#5f0 224px)"></i><i style="top:27px;background:linear-gradient(90deg,#00ff02 10px,#0f0 178px,#45ff00 216px,#8cff00 250px)"></i><i style="top:30px;background:linear-gradient(90deg,#00ff05 8px,#0f0 56px,#0f0 178px,#2dff00 204px,#65ff00 232px,#9f0 256px,#d4ff00 280px)"></i><i style="top:33px;background:linear-gradient(90deg,#00ff09 6px,#0f0 88px,#0f0 178px,#31ff00 206px,#71ff00 238px,#b1ff00 266px,#faff00 294px,#fffe00 296px,#fe0 302px)"></i><i style="top:36px;background:linear-gradient(90deg,#00ff0d 4px,#0f0 120px,#01ff00 180px,#38ff00 210px,#75ff00 240px,#b6ff00 268px,#fbff00 294px,#fffe00 296px,#ffd600 312px,#ffb700 328px)"></i><i style="top:39px;background:linear-gradient(90deg,#0f1 2px,#0f0 152px,#0f0 180px,#37ff00 210px,#75ff00 240px,#b2ff00 266px,#fffd00 296px,#ffde00 308px,#ffc100 322px,#ff9000 354px)"></i><i style="top:42px;background:linear-gradient(90deg,#00ff14 2px,#00ff01 180px,#37ff00 210px,#70ff00 238px,#adff00 264px,#fcff00 294px,#fffc00 296px,#ffd000 314px,#ffab00 334px,#ff8d00 356px,#ff7100 382px)"></i><i style="top:45px;background:linear-gradient(90deg,#00ff18 0px,#00ff05 180px,#32ff01 208px,#75ff00 240px,#b7ff00 268px,#fdff00 294px,#ffc700 318px,#ff9f00 342px,#ff7800 374px,#ff5a00 410px)"></i><i style="top:48px;background:linear-gradient(90deg,#00ff1c 0px,#01ff0a 182px,#39ff06 212px,#79ff01 242px,#b7ff00 268px,#feff00 294px,#ffdc00 308px,#ffc200 320px,#ff9300 350px,#ff6a00 388px,#ff4900 434px)"></i><i style="top:51px;background:linear-gradient(90deg,#00ff20 0px,#01ff0f 182px,#39ff0b 212px,#79ff07 242px,#b8ff02 268px,#ff0 294px,#ffdb00 308px,#ffbe00 322px,#ffa300 338px,#f80 358px,#ff7100 380px,#ff5d00 404px,#ff3b00 460px)"></i><i style="top:54px;background:linear-gradient(90deg,#00ff23 0px,#00ff14 182px,#38ff11 212px,#74ff0d 240px,#b8ff08 268px,#fffe04 294px,#ffda01 308px,#ffb500 326px,#f90 344px,#ff7e00 366px,#ff6700 390px,#ff5200 418px,#ff2f00 486px)"></i><i style="top:57px;background:linear-gradient(90deg,#00ff27 0px,#00ff19 182px,#34ff16 210px,#74ff12 240px,#b3ff0f 266px,#fbff0b 292px,#fffe0a 294px,#ffd406 310px,#ffae02 330px,#ff9000 350px,#ff7500 374px,#ff5c00 402px,#ff4700 434px,#ff2500 512px)"></i><i style="top:60px;background:linear-gradient(90deg,#00ff2b 0px,#02ff1e 184px,#3bff1b 214px,#78ff18 242px,#b8ff15 268px,#fbff11 292px,#fffd11 294px,#ffcb0b 314px,#ffa907 332px,#ff8803 356px,#ff6c00 382px,#ff5400 412px,#ff3f00 448px,#ff2c00 490px,#ff1c00 538px)"></i><i style="top:63px;background:linear-gradient(90deg,#00ff2f 0px,#01ff23 184px,#37ff21 212px,#73ff1e 240px,#aeff1b 264px,#fcff18 292px,#fffc17 294px,#ffce11 312px,#ffa50b 334px,#ff8406 358px,#ff6602 388px,#ff4d00 422px,#ff3700 462px,#ff2400 510px,#ff1500 564px)"></i><i style="top:66px;background:linear-gradient(90deg,#0f3 0px,#00ff29 184px,#36ff27 212px,#6eff24 238px,#b4ff21 266px,#fdff1e 292px,#fffb1e 294px,#ffc916 314px,#ffa10f 336px,#ff7d0a 364px,#ff5f05 396px,#ff4501 434px,#ff3000 478px,#ff1d00 532px,#ff0d00 594px)"></i><i style="top:69px;background:linear-gradient(90deg,#00ff37 0px,#00ff2e 184px,#31ff2c 210px,#6eff2a 238px,#b4ff28 266px,#feff25 292px,#fffa24 294px,#ffc81b 314px,#ff9d14 338px,#ff780d 368px,#ff5907 402px,#ff4003 442px,#ff2a00 490px,#ff1800 546px,#ff0900 614px)"></i><i style="top:72px;background:linear-gradient(90deg,#00ff3b 0px,#02ff34 186px,#39ff32 214px,#77ff30 242px,#b9ff2e 268px,#ffff2c 292px,#ffc721 314px,#ff9c18 338px,#f71 368px,#ff560a 406px,#ff3b05 450px,#ff2500 504px,#ff1200 568px,#ff0300 644px)"></i><i style="top:75px;background:linear-gradient(90deg,#00ff3f 0px,#01ff39 186px,#38ff38 214px,#77ff36 242px,#baff35 268px,#fffe33 292px,#ffe22d 302px,#ffc627 314px,#ff961c 342px,#ff7013 374px,#ff4f0c 414px,#ff3506 462px,#ff1e01 522px,#ff0b00 600px,#f00 670px)"></i><i style="top:78px;background:linear-gradient(90deg,#00ff43 0px,#00ff3f 186px,#38ff3e 214px,#77ff3d 242px,#b5ff3c 266px,#fffe3a 292px,#ffdc32 304px,#ffc12b 316px,#ff9220 344px,#ff6916 380px,#ff490e 422px,#ff2d07 478px,#ff1701 546px,#f00 656px,#f00 696px)"></i><i style="top:81px;background:linear-gradient(90deg,#00ff47 0px,#0f4 186px,#3f4 212px,#72ff43 240px,#afff43 264px,#fffd41 292px,#ffdb38 304px,#ffc031 316px,#ffa62a 330px,#ff8e24 346px,#ff6619 382px,#ff4510 428px,#ff2808 490px,#ff1102 568px,#f00 654px,#f00 718px)"></i><i style="top:84px;background:linear-gradient(90deg,#00ff4b 0px,#00ff4a 186px,#2aff4a 208px,#6dff4a 238px,#aaff4a 262px,#fcff49 290px,#fffc48 292px,#ffda3f 304px,#ffbb36 318px,#ffa22e 332px,#ff8b27 348px,#ff601b 388px,#ff4012 436px,#ff2109 506px,#ff0a02 596px,#f00 652px,#f00 746px)"></i><i style="top:87px;background:linear-gradient(90deg,#00ff4f 0px,#01ff50 188px,#36ff50 214px,#72ff50 240px,#b5ff50 266px,#fdff51 290px,#fffb4f 292px,#ffd945 304px,#ffba3b 318px,#ff9e32 334px,#ff852a 352px,#ff5c1e 392px,#ff3b13 444px,#ff1c0a 522px,#ff0402 626px,#ff0001 648px,#f00 776px)"></i><i style="top:90px;background:linear-gradient(90deg,#00ff53 0px,#00ff56 188px,#35ff56 214px,#71ff57 240px,#b6ff58 266px,#feff58 290px,#fffa57 292px,#ffd44a 306px,#ffb540 320px,#ff9a36 336px,#ff812e 354px,#ff5820 396px,#ff3715 450px,#ff180b 534px,#ff0003 644px,#f00 800px)"></i><i style="top:93px;background:linear-gradient(90deg,#00ff57 0px,#00ff5c 188px,#35ff5d 214px,#76ff5e 242px,#b6ff5f 266px,#ffff60 290px,#ffd852 304px,#ffb847 318px,#ff9c3c 334px,#ff8333 352px,#ff6c2b 372px,#ff5724 396px,#ff3417 454px,#ff170c 536px,#ff0004 642px,#f00 830px)"></i><i style="top:96px;background:linear-gradient(90deg,#00ff5c 0px,#00ff62 188px,#30ff63 212px,#71ff65 240px,#b6ff66 266px,#ffff68 290px,#ffd758 304px,#ffb74c 318px,#ff9b42 334px,#ff7f37 354px,#ff682e 376px,#ff5326 400px,#ff3119 460px,#ff150e 538px,#ff0006 638px,#f00 762px,#f00 856px)"></i><i style="top:99px;background:linear-gradient(90deg,#00ff60 0px,#01ff68 190px,#38ff6a 216px,#76ff6c 242px,#b1ff6e 264px,#fffe6f 290px,#ffd65f 304px,#ffb652 318px,#ff9a47 334px,#ff7e3b 354px,#ff6732 376px,#ff5129 402px,#ff2f1b 462px,#ff1510 538px,#ff0008 636px,#f00 866px)"></i><i style="top:102px;background:linear-gradient(90deg,#00ff64 2px,#00ff6e 190px,#37ff71 216px,#75ff73 242px,#b1ff75 264px,#fffd77 290px,#ffd566 304px,#ffb558 318px,#ff994c 334px,#ff7d40 354px,#ff6636 376px,#ff502c 402px,#ff2e1e 462px,#ff1412 538px,#ff000a 634px,#f00 866px)"></i><i style="top:105px;background:linear-gradient(90deg,#00ff69 2px,#00ff75 190px,#32ff77 214px,#70ff7a 240px,#acff7d 262px,#fcff80 288px,#fffc7f 290px,#ffd46c 304px,#ffb45e 318px,#ff9851 334px,#ff7c44 354px,#ff653a 376px,#ff4f30 402px,#ff2e20 462px,#ff1415 536px,#ff000c 630px,#f00 866px)"></i><i style="top:108px;background:linear-gradient(90deg,#00ff6d 2px,#00ff7b 190px,#2dff7e 212px,#6bff81 238px,#b2ff85 264px,#fdff89 288px,#fffb87 290px,#ffd373 304px,#ffb364 318px,#ff9756 334px,#ff7b49 354px,#ff643e 376px,#ff4f33 402px,#ff2d23 462px,#ff1417 536px,#ff000d 628px,#ff0001 866px)"></i><i style="top:111px;background:linear-gradient(90deg,#00ff72 4px,#01ff82 192px,#35ff85 216px,#70ff89 240px,#b2ff8d 264px,#fdff91 288px,#fffa8f 290px,#ffd27a 304px,#ffb26a 318px,#ff965c 334px,#ff7b4e 354px,#ff6342 376px,#ff4e37 402px,#ff2c26 462px,#ff1319 534px,#ff000f 624px,#ff0002 866px)"></i><i style="top:114px;background:linear-gradient(90deg,#00ff76 4px,#00ff89 192px,#39ff8c 218px,#7aff91 244px,#b8ff95 266px,#feff9a 288px,#ffd684 302px,#ffb572 316px,#ff9863 332px,#ff7c54 352px,#ff6447 374px,#ff4e3b 400px,#ff2c29 460px,#ff131c 532px,#f01 622px,#ff0003 866px)"></i><i style="top:117px;background:linear-gradient(90deg,#00ff7b 4px,#00ff8f 192px,#34ff93 216px,#74ff98 242px,#b8ff9d 266px,#ffffa2 288px,#ffd58b 302px,#ffb479 316px,#ff9768 332px,#ff7b58 352px,#ff634b 374px,#ff4e3f 400px,#ff2c2c 460px,#ff131e 530px,#ff0013 618px,#ff0004 866px)"></i><i style="top:120px;background:linear-gradient(90deg,#00ff80 6px,#00ff96 192px,#2eff9a 214px,#6fffa0 240px,#b3ffa5 264px,#fffeab 288px,#ffd492 302px,#ffb37f 316px,#ff966e 332px,#ff7a5d 352px,#ff624f 374px,#ff4d42 400px,#ff2b2e 460px,#ff1320 530px,#ff0015 616px,#ff0005 866px)"></i><i style="top:123px;background:linear-gradient(90deg,#00ff85 6px,#01ff9d 194px,#37ffa2 218px,#74ffa8 242px,#adffad 262px,#fffdb3 288px,#ffd399 302px,#ffb285 316px,#ff9573 332px,#ff7962 352px,#ff6153 374px,#ff4c46 400px,#ff2a31 460px,#ff1323 528px,#ff0017 612px,#ff0006 866px)"></i><i style="top:126px;background:linear-gradient(90deg,#00ff89 8px,#00ffa5 194px,#36ffaa 218px,#74ffb0 242px,#b3ffb6 264px,#fbffbd 286px,#fffcbc 288px,#ffd2a0 302px,#ffb18c 316px,#ff9479 332px,#ff7867 352px,#ff6057 374px,#ff4b4a 400px,#ff2934 460px,#ff1325 526px,#ff0019 610px,#ff0007 866px)"></i><i style="top:129px;background:linear-gradient(90deg,#00ff8e 8px,#00ff9c 110px,#00ffac 194px,#31ffb1 216px,#6effb8 240px,#b3ffbf 264px,#fcffc7 286px,#fffbc4 288px,#ffd0a8 302px,#ffb092 316px,#ff937e 332px,#ff776c 352px,#ff5f5c 374px,#ff4c4e 398px,#ff2a37 458px,#ff1328 524px,#ff001b 606px,#ff0008 866px)"></i><i style="top:132px;background:linear-gradient(90deg,#00ff93 8px,#00ffa2 110px,#00ffb3 194px,#2bffb8 214px,#68ffbf 238px,#aeffc7 262px,#fdffd0 286px,#fffacd 288px,#ffcfaf 302px,#ffaf98 316px,#ff9284 332px,#ff7670 352px,#ff5e60 374px,#ff4b52 398px,#ff293a 458px,#ff122a 522px,#ff001d 604px,#ff0009 866px)"></i><i style="top:135px;background:linear-gradient(90deg,#00ff98 10px,#00ffa8 112px,#01ffbb 196px,#34ffc1 218px,#6dffc8 240px,#b4ffd1 264px,#feffda 286px,#fff9d6 288px,#ffceb7 302px,#ffae9f 316px,#ff918a 332px,#ff7575 352px,#ff5e64 374px,#ff4a56 398px,#ff283d 458px,#ff122d 522px,#ff0020 600px,#ff0014 716px,#ff000a 866px)"></i><i style="top:138px;background:linear-gradient(90deg,#00ff9d 10px,#00ffae 112px,#00ffc2 196px,#39ffca 220px,#78ffd2 244px,#bbffdb 266px,#ffffe4 286px,#ffd3c2 300px,#ffb1a9 314px,#ff9392 330px,#ff767c 350px,#ff5e6a 372px,#ff4a5a 396px,#ff2840 456px,#ff122f 520px,#f02 598px,#ff0015 714px,#ff000b 866px)"></i><i style="top:141px;background:linear-gradient(90deg,#00ffa3 12px,#00ffb4 112px,#00ffca 196px,#33ffd1 218px,#72ffda 242px,#b5ffe4 264px,#fffeed 286px,#ffd7cf 298px,#ffb4b3 312px,#ff959a 328px,#ff7883 348px,#ff5f70 370px,#ff4b5f 394px,#ff2743 456px,#ff1132 520px,#ff0024 596px,#ff0017 714px,#ff000d 866px)"></i><i style="top:144px;background:linear-gradient(90deg,#00ffa8 12px,#0fb 112px,#00ffd2 196px,#2dffd9 216px,#72ffe3 242px,#afffec 262px,#fffdf6 286px,#ffd6d7 298px,#ffb3ba 312px,#ff94a0 328px,#f78 348px,#ff5e74 370px,#ff4a63 394px,#ff2847 454px,#ff1235 516px,#ff0026 592px,#ff0018 710px,#ff000e 864px)"></i><i style="top:147px;background:linear-gradient(90deg,#00ffad 14px,#00ffc1 114px,#02ffda 198px,#31ffe2 218px,#66ffea 238px,#a2fff4 258px,#e5ffff 278px,#fefbff 286px,#fff4fa 288px,#ffcad5 302px,#ffa9ba 316px,#ff8da1 332px,#ff7189 352px,#ff5a75 374px,#ff4665 398px,#ff2548 458px,#ff1037 518px,#ff0029 590px,#ff001a 708px,#ff000f 862px)"></i><i style="top:150px;background:linear-gradient(90deg,#00ffb2 14px,#00ffc8 114px,#01ffe2 198px,#50fff0 230px,#a9ffff 260px,#ffecfd 290px,#ffc4d9 304px,#ffa4bd 318px,#ff88a4 334px,#ff6d8c 354px,#ff5778 376px,#ff4467 400px,#ff234b 460px,#ff103a 516px,#ff002b 586px,#ff001c 704px,#ff0010 858px)"></i><i style="top:153px;background:linear-gradient(90deg,#00ffb8 16px,#00ffcf 116px,#00ffea 198px,#35fff4 220px,#71ffff 242px,#fee4ff 292px,#ffdefa 294px,#ffb9d7 308px,#ff9bbc 322px,#ff81a4 338px,#ff688d 358px,#ff5279 380px,#ff3f67 406px,#ff204b 466px,#ff0e3b 520px,#ff002d 584px,#ff001e 702px,#f01 856px)"></i><i style="top:156px;background:linear-gradient(90deg,#00ffbd 16px,#00ffd5 116px,#00fff3 198px,#3fffff 224px,#ffd7fd 296px,#ffb3da 310px,#ff97c0 324px,#ff7da7 340px,#ff6590 360px,#ff507c 382px,#ff3d6a 408px,#ff1f4d 468px,#ff0e3d 520px,#ff0030 580px,#ff001f 698px,#ff0013 852px)"></i><i style="top:159px;background:linear-gradient(90deg,#00ffc3 16px,#00ffdc 116px,#00fffb 198px,#10ffff 206px,#50f2ff 232px,#fecfff 298px,#ffcbfa 300px,#ffa9d9 314px,#ff8fbf 328px,#ff74a5 346px,#ff5d8f 366px,#ff386a 414px,#ff1c4e 474px,#ff0032 578px,#ff0021 696px,#ff0014 850px)"></i><i style="top:162px;background:linear-gradient(90deg,#00ffc9 18px,#00ffe1 110px,#0ff 188px,#01f9ff 200px,#74e2ff 248px,#ffc4fd 302px,#ffa4dc 316px,#ff8ac2 330px,#ff70a8 348px,#ff5a91 368px,#ff366c 416px,#ff1a50 476px,#ff0035 574px,#ff0023 692px,#ff0015 846px)"></i><i style="top:165px;background:linear-gradient(90deg,#00ffcf 20px,#00ffe5 100px,#0ff 170px,#00f1ff 200px,#79d8ff 252px,#febdff 304px,#ffb9fb 306px,#ff9bdb 320px,#ff80be 336px,#ff6aa8 352px,#ff5692 372px,#ff336d 420px,#ff1750 482px,#ff0037 572px,#ff0025 690px,#ff0017 844px)"></i><i style="top:168px;background:linear-gradient(90deg,#00ffd4 20px,#00ffe8 90px,#0ff 152px,#00eaff 200px,#6cd3ff 248px,#ffb3fd 308px,#ff96de 322px,#ff7cc1 338px,#ff65a8 356px,#ff5193 376px,#ff306e 424px,#ff1551 486px,#ff003a 570px,#ff0026 688px,#ff0018 842px)"></i><i style="top:171px;background:linear-gradient(90deg,#00ffda 22px,#0ff 134px,#00e2ff 200px,#56d0ff 240px,#feacff 310px,#ffa8fb 312px,#ff91e0 324px,#ff7ac7 338px,#ff539b 372px,#ff3478 414px,#ff1c5c 466px,#ff0d4b 512px,#ff003d 566px,#ff0029 684px,#ff0019 838px)"></i><i style="top:174px;background:linear-gradient(90deg,#00ffe0 22px,#0ff 116px,#01dbff 202px,#77c1ff 256px,#ffa3fe 314px,#ff8ce3 326px,#ff77ca 340px,#ff519e 374px,#ff327a 416px,#ff1a5e 468px,#ff003f 564px,#ff002a 682px,#ff001b 836px)"></i><i style="top:177px;background:linear-gradient(90deg,#00ffe7 24px,#0ff 98px,#00d4ff 202px,#66beff 250px,#fe9dff 316px,#ff9afb 318px,#ff84e2 330px,#ff70c9 344px,#ff4c9e 378px,#ff2f7b 420px,#ff185f 472px,#ff0042 560px,#ff002d 676px,#ff001c 832px)"></i><i style="top:180px;background:linear-gradient(90deg,#00ffec 24px,#0ff 80px,#00cdff 202px,#6fb5ff 256px,#ff95fe 320px,#ff7de0 334px,#ff6ac9 348px,#ff489e 382px,#ff2c7c 424px,#ff1661 474px,#ff0045 558px,#ff002f 674px,#ff001d 830px)"></i><i style="top:183px;background:linear-gradient(90deg,#00fff3 26px,#0ff 62px,#00c7ff 202px,#5bb3ff 248px,#fe8fff 322px,#ff8cfc 324px,#ff76df 338px,#ff64c8 352px,#ff449f 386px,#ff297d 428px,#ff1462 478px,#ff0048 554px,#ff0031 670px,#ff001f 826px)"></i><i style="top:186px;background:linear-gradient(90deg,#00fff9 26px,#0ff 44px,#01c1ff 204px,#79a6ff 264px,#ff87fe 326px,#ff72e2 340px,#ff60cb 354px,#ff41a1 388px,#ff277f 430px,#ff1364 480px,#ff004b 552px,#f03 668px,#ff0020 824px)"></i><i style="top:189px;background:linear-gradient(90deg,#00feff 28px,#0bf 204px,#69a3ff 258px,#fe82ff 328px,#ff7ffc 330px,#ff5bca 358px,#ff3da1 392px,#ff2581 432px,#f16 482px,#ff004e 548px,#ff0035 664px,#f02 820px)"></i><i style="top:192px;background:linear-gradient(90deg,#00f8ff 28px,#00b6ff 204px,#729cff 264px,#ff7bfe 332px,#ff58cc 360px,#ff3ba4 394px,#ff2483 434px,#ff1068 484px,#ff0051 546px,#ff003f 618px,#ff0030 708px,#ff0023 818px)"></i><i style="top:195px;background:linear-gradient(90deg,#00f2ff 30px,#00b1ff 204px,#5f9aff 256px,#fe76ff 334px,#ff74fc 336px,#ff52cc 364px,#ff37a4 398px,#ff2184 438px,#ff0e69 488px,#ff0054 542px,#ff0040 620px,#ff0031 708px,#ff0025 814px)"></i><i style="top:198px;background:linear-gradient(90deg,#00ecff 30px,#01abff 206px,#7790ff 270px,#ff70fe 338px,#ff4fce 366px,#ff36a8 398px,#ff2087 438px,#ff0d6b 488px,#ff0057 540px,#ff0042 620px,#f03 706px,#ff0026 812px)"></i><i style="top:201px;background:linear-gradient(90deg,#00e6ff 32px,#00a6ff 206px,#6c8dff 266px,#fe6bff 340px,#ff69fc 342px,#ff4bcd 370px,#ff31a6 404px,#ff1d87 444px,#ff0b6c 492px,#ff005b 536px,#f04 620px,#ff0034 706px,#ff0028 808px)"></i><i style="top:204px;background:linear-gradient(90deg,#00e0ff 34px,#00a2ff 206px,#7486ff 272px,#ff65fe 344px,#ff48cf 372px,#ff2fa8 406px,#ff1b89 446px,#ff0a6e 494px,#ff005e 534px,#ff0045 622px,#ff0036 706px,#ff0029 806px)"></i><i style="top:207px;background:linear-gradient(90deg,#00dbff 34px,#009dff 206px,#6385ff 264px,#fe61ff 346px,#ff5ffc 348px,#ff43cf 376px,#ff2ca9 410px,#ff1889 450px,#ff086f 498px,#ff0062 530px,#ff0047 624px,#ff0037 706px,#ff002b 804px)"></i><i style="top:210px;background:linear-gradient(90deg,#00d5ff 36px,#0198ff 208px,#797cff 278px,#ff5cfe 350px,#ff40d1 378px,#ff2bac 410px,#ff188c 450px,#ff0771 498px,#ff0065 528px,#ff0049 622px,#ff0039 704px,#ff002c 800px)"></i><i style="top:213px;background:linear-gradient(90deg,#00d0ff 38px,#0094ff 208px,#6f7aff 274px,#ff56fd 354px,#ff3cd0 382px,#ff26ab 416px,#ff148c 456px,#ff0672 502px,#ff0068 526px,#ff004a 624px,#ff002e 798px)"></i><i style="top:216px;background:linear-gradient(90deg,#00cbff 38px,#0090ff 208px,#7774ff 280px,#ff53fe 356px,#ff3ad2 384px,#ff25ae 416px,#ff138f 456px,#ff0575 502px,#ff006c 522px,#ff004c 624px,#ff0030 794px)"></i><i style="top:219px;background:linear-gradient(90deg,#00c6ff 40px,#008cff 208px,#6673ff 272px,#ff4dfd 360px,#ff36d2 388px,#ff22af 420px,#ff118f 460px,#ff0376 506px,#ff0060 560px,#ff004d 626px,#ff0031 792px)"></i><i style="top:222px;background:linear-gradient(90deg,#00c1ff 42px,#0188ff 210px,#7b6aff 286px,#ff4aff 362px,#ff33d4 390px,#ff20b0 422px,#ff1092 460px,#ff0278 506px,#ff0062 560px,#ff0050 624px,#f03 788px)"></i><i style="top:225px;background:linear-gradient(90deg,#00bdff 42px,#0084ff 210px,#7169ff 282px,#ff45fd 366px,#ff2fd3 394px,#ff1eb0 426px,#ff0e93 464px,#ff0179 510px,#ff0063 564px,#ff0051 626px,#ff0034 786px)"></i><i style="top:228px;background:linear-gradient(90deg,#00b9ff 44px,#0081ff 210px,#7863ff 288px,#ff42ff 368px,#ff2dd5 396px,#ff1cb2 428px,#ff0d94 466px,#ff007b 510px,#f06 562px,#ff0053 624px,#ff0036 782px)"></i><i style="top:231px;background:linear-gradient(90deg,#00b4ff 46px,#007eff 210px,#6963ff 280px,#ff3efd 372px,#ff2ad4 400px,#ff19b2 432px,#ff0a95 470px,#ff007c 514px,#ff0067 566px,#f05 626px,#ff0038 780px)"></i><i style="top:234px;background:linear-gradient(90deg,#00b0ff 46px,#017aff 212px,#7c5bff 294px,#ff3bff 374px,#ff27d6 402px,#ff17b4 434px,#ff0a98 470px,#ff007f 514px,#ff006a 564px,#ff0057 624px,#ff003a 776px)"></i><i style="top:237px;background:linear-gradient(90deg,#00acff 48px,#07f 212px,#735aff 290px,#ff36fd 378px,#ff24d5 406px,#ff14b4 438px,#ff099c 468px,#ff0089 500px,#ff007f 518px,#ff006a 568px,#ff0058 626px,#ff003b 774px)"></i><i style="top:240px;background:linear-gradient(90deg,#00a8ff 50px,#0074ff 212px,#7a55ff 296px,#ff34ff 380px,#ff23da 406px,#ff14b8 438px,#ff09a1 466px,#ff008c 498px,#ff0082 518px,#ff006c 568px,#ff005a 626px,#ff003d 770px)"></i><i style="top:243px;background:linear-gradient(90deg,#00a5ff 50px,#0071ff 212px,#6b55ff 288px,#ff30fd 384px,#ff20d9 410px,#ff11b8 442px,#ff0091 494px,#ff0082 522px,#ff006d 572px,#ff005b 628px,#ff003f 768px)"></i><i style="top:246px;background:linear-gradient(90deg,#00a1ff 52px,#016dff 214px,#7e4eff 302px,#ff2dff 386px,#ff1edb 412px,#ff0fb9 444px,#ff0095 492px,#ff0085 522px,#ff0070 570px,#ff005e 626px,#ff0040 766px)"></i><i style="top:249px;background:linear-gradient(90deg,#009dff 52px,#006aff 214px,#724eff 296px,#ff29fd 390px,#ff1bda 416px,#ff0db9 448px,#ff009b 488px,#ff0086 524px,#ff0071 572px,#ff0060 626px,#ff0042 762px)"></i><i style="top:252px;background:linear-gradient(90deg,#009aff 54px,#0068ff 214px,#7949ff 302px,#ff27ff 392px,#ff19dc 418px,#ff0bbb 450px,#ff009f 486px,#f08 526px,#ff0073 572px,#ff0061 626px,#f04 760px)"></i><i style="top:255px;background:linear-gradient(90deg,#0096ff 56px,#0065ff 214px,#6e49ff 296px,#ff23fd 396px,#ff16db 422px,#ff09bb 454px,#ff00a3 484px,#ff0089 528px,#ff0075 574px,#ff0063 626px,#ff0046 756px)"></i><i style="top:258px;background:linear-gradient(90deg,#0093ff 56px,#0162ff 216px,#7c43ff 308px,#ff21ff 398px,#ff13da 426px,#ff07bc 456px,#ff00a9 480px,#ff008b 530px,#ff0076 576px,#ff0065 628px,#ff0048 754px)"></i><i style="top:261px;background:linear-gradient(90deg,#008fff 58px,#0060ff 216px,#7442ff 304px,#ff1efe 402px,#ff11dc 428px,#ff06be 458px,#ff00ae 478px,#ff008c 532px,#ff0067 626px,#ff004a 750px)"></i><i style="top:264px;background:linear-gradient(90deg,#008cff 60px,#005dff 216px,#7a3eff 310px,#ff1cff 404px,#ff0fdd 430px,#ff04bf 460px,#ff00b2 476px,#ff008f 532px,#ff0069 626px,#ff004c 748px)"></i><i style="top:267px;background:linear-gradient(90deg,#0089ff 62px,#005bff 216px,#703eff 304px,#ff18fe 408px,#ff0ddd 434px,#ff02bf 464px,#ff00a7 496px,#ff0090 534px,#ff006b 626px,#ff004e 744px)"></i><i style="top:270px;background:linear-gradient(90deg,#0086ff 62px,#0158ff 218px,#7d38ff 316px,#ff16ff 410px,#ff0bde 436px,#ff01c1 466px,#ff00a8 498px,#ff0092 536px,#ff006d 626px,#ff0050 742px)"></i><i style="top:273px;background:linear-gradient(90deg,#0083ff 64px,#0056ff 218px,#7637ff 312px,#ff13fe 414px,#ff08dd 440px,#ff00c2 468px,#f0a 500px,#ff0093 538px,#ff006e 626px,#ff0052 738px)"></i><i style="top:276px;background:linear-gradient(90deg,#0080ff 66px,#0054ff 218px,#7b34ff 318px,#f1f 416px,#ff07df 442px,#ff00c4 470px,#ff00ab 502px,#ff0095 538px,#ff0070 626px,#ff0054 736px)"></i><i style="top:279px;background:linear-gradient(90deg,#007dff 68px,#0052ff 218px,#7134ff 312px,#ff0ffe 420px,#ff01d2 458px,#ff00c3 474px,#ff00ab 506px,#ff0097 540px,#ff0073 624px,#ff0056 732px)"></i><i style="top:282px;background:linear-gradient(90deg,#007aff 70px,#014fff 220px,#7e2eff 324px,#ff0dff 422px,#ff00d7 456px,#ff00c5 476px,#ff00ad 508px,#ff0098 542px,#ff0074 626px,#ff0058 730px)"></i><i style="top:285px;background:linear-gradient(90deg,#07f 70px,#004dff 220px,#772eff 320px,#ff0afe 426px,#f0d 454px,#ff00c6 478px,#ff00ae 510px,#f09 544px,#ff0076 626px,#ff005a 728px)"></i><i style="top:288px;background:linear-gradient(90deg,#0075ff 72px,#004bff 220px,#7c2aff 326px,#ff08ff 428px,#ff00e5 450px,#ff00c8 480px,#ff009c 544px,#ff0079 624px,#ff005c 724px)"></i><i style="top:291px;background:linear-gradient(90deg,#0072ff 74px,#0049ff 220px,#732bff 320px,#ff06fe 432px,#ff00eb 448px,#ff00c9 482px,#ff009d 546px,#ff007b 624px,#ff005e 722px)"></i><i style="top:294px;background:linear-gradient(90deg,#006fff 76px,#0147ff 222px,#7d26ff 330px,#ff04ff 434px,#ff00f1 446px,#ff00cb 484px,#ff00a0 546px,#ff007d 622px,#ff0061 718px)"></i><i style="top:297px;background:linear-gradient(90deg,#006dff 76px,#0045ff 222px,#7825ff 328px,#ff01fe 438px,#ff00e2 462px,#ff00ca 488px,#ff00a1 548px,#ff007e 624px,#ff0063 716px)"></i><i style="top:300px;background:linear-gradient(90deg,#006aff 78px,#0043ff 222px,#7b23ff 332px,#f0f 440px,#f0c 490px,#ff00a2 550px,#ff0081 622px,#ff0065 712px)"></i><i style="top:303px;background:linear-gradient(90deg,#0068ff 80px,#0042ff 222px,#7422ff 328px,#ff00fe 444px,#ff00cd 492px,#ff00a4 552px,#ff0082 624px,#ff0067 710px)"></i><i style="top:306px;background:linear-gradient(90deg,#0065ff 82px,#013fff 224px,#7e1eff 338px,#ed00ff 432px,#f0f 446px,#ff00ce 494px,#ff00a6 552px,#ff0085 622px,#ff006a 706px)"></i><i style="top:309px;background:linear-gradient(90deg,#0063ff 82px,#003eff 224px,#7120ff 328px,#e700ff 430px,#ff00fe 450px,#ff00ce 498px,#ff00a7 554px,#ff0087 622px,#ff006c 704px)"></i><i style="top:312px;background:linear-gradient(90deg,#0061ff 84px,#003cff 224px,#6d1fff 326px,#df00ff 426px,#f0f 452px,#ff00cf 500px,#f0a 554px,#ff008a 620px,#ff006f 700px)"></i><i style="top:315px;background:linear-gradient(90deg,#005fff 86px,#003bff 224px,#671fff 322px,#da00ff 424px,#ff00fe 456px,#ff00d0 502px,#ff00ab 556px,#ff008c 620px,#ff0071 698px)"></i><i style="top:318px;background:linear-gradient(90deg,#005cff 88px,#0139ff 226px,#671dff 324px,#d200ff 420px,#f0f 458px,#ff00d2 504px,#ff00ad 556px,#ff008e 620px,#ff0074 694px)"></i><i style="top:321px;background:linear-gradient(90deg,#005aff 90px,#0037ff 226px,#651cff 324px,#cd00ff 418px,#ff00fe 462px,#ff00d3 506px,#ff00ae 558px,#ff0090 620px,#ff0076 692px)"></i><i style="top:324px;background:linear-gradient(90deg,#0058ff 92px,#0036ff 226px,#621bff 322px,#c800ff 416px,#fe00ff 464px,#ff00d4 508px,#ff00b1 558px,#ff0092 618px,#ff0078 690px)"></i><i style="top:327px;background:linear-gradient(90deg,#0056ff 94px,#0034ff 226px,#5a1cff 316px,#c000ff 412px,#ff00fe 468px,#ff00d5 510px,#ff00b2 560px,#ff0094 618px,#ff007b 686px)"></i><i style="top:330px;background:linear-gradient(90deg,#0054ff 94px,#0133ff 228px,#5c1aff 320px,#bc00ff 410px,#fe00ff 470px,#ff00d7 512px,#ff00b4 560px,#ff0096 618px,#ff007d 684px)"></i><i style="top:333px;background:linear-gradient(90deg,#0052ff 96px,#0131ff 228px,#5919ff 318px,#b500ff 406px,#ff00fe 474px,#ff00d8 514px,#ff00b6 562px,#f09 616px,#ff0081 680px)"></i><i style="top:336px;background:linear-gradient(90deg,#0050ff 98px,#0030ff 228px,#5818ff 318px,#b000ff 404px,#fe00ff 476px,#ff00d7 518px,#ff00b8 562px,#ff009b 616px,#ff0083 678px)"></i><i style="top:339px;background:linear-gradient(90deg,#004eff 100px,#002fff 228px,#5019ff 312px,#a0f 400px,#f0f 480px,#ff00da 518px,#ff00b9 564px,#ff009d 616px,#ff0086 674px)"></i><i style="top:342px;background:linear-gradient(90deg,#004cff 102px,#012dff 230px,#a500ff 398px,#fe00ff 482px,#ff00da 522px,#ff00bc 564px,#ff00a0 614px,#f08 672px)"></i><i style="top:345px;background:linear-gradient(90deg,#004aff 104px,#012cff 230px,#9f00ff 394px,#f0f 486px,#f0d 522px,#ff00be 564px,#ff00a3 612px,#ff008c 668px)"></i><i style="top:348px;background:linear-gradient(90deg,#0049ff 104px,#002aff 230px,#9b00ff 392px,#fe00ff 488px,#ff00dc 526px,#ff00bf 566px,#ff00a5 612px,#ff008e 666px)"></i><i style="top:351px;background:linear-gradient(90deg,#0047ff 106px,#0029ff 230px,#9500ff 388px,#f0f 492px,#ff00df 526px,#ff00c2 566px,#ff00a9 610px,#ff0092 662px)"></i><i style="top:354px;background:linear-gradient(90deg,#0045ff 108px,#0128ff 232px,#9100ff 386px,#fe00ff 494px,#ff00de 530px,#ff00c3 568px,#f0a 612px,#ff0094 660px)"></i><i style="top:357px;background:linear-gradient(90deg,#0043ff 110px,#0126ff 232px,#8d00ff 384px,#f0f 498px,#ff00e1 530px,#ff00c5 568px,#ff00ad 610px,#ff0098 656px)"></i><i style="top:360px;background:linear-gradient(90deg,#0041ff 112px,#0025ff 232px,#8700ff 380px,#fe00ff 500px,#ff00e0 534px,#ff00c6 570px,#ff009a 654px)"></i><i style="top:363px;background:linear-gradient(90deg,#003fff 114px,#0024ff 232px,#8400ff 378px,#f0f 504px,#ff00e2 536px,#ff00c9 570px,#ff009d 652px)"></i><i style="top:366px;background:linear-gradient(90deg,#003eff 114px,#0123ff 234px,#7e00ff 374px,#fe00ff 506px,#ff00cb 570px,#ff00a1 648px)"></i><i style="top:369px;background:linear-gradient(90deg,#003cff 116px,#0122ff 234px,#7b00ff 372px,#f0f 510px,#ff00e4 540px,#f0c 572px,#ff00a3 646px)"></i><i style="top:372px;background:linear-gradient(90deg,#003bff 118px,#0021ff 234px,#7500ff 368px,#fe00ff 512px,#ff00ce 572px,#ff00a7 642px)"></i><i style="top:375px;background:linear-gradient(90deg,#0039ff 120px,#0020ff 234px,#7200ff 366px,#f0f 516px,#ff00d1 572px,#f0a 640px)"></i><i style="top:378px;background:linear-gradient(90deg,#0038ff 122px,#011eff 236px,#6d00ff 362px,#fe00ff 518px,#ff00d2 574px,#ff00ae 636px)"></i><i style="top:381px;background:linear-gradient(90deg,#0036ff 124px,#011dff 236px,#6a00ff 360px,#f0f 522px,#ff00d4 574px,#ff00b1 634px)"></i><i style="top:384px;background:linear-gradient(90deg,#0034ff 126px,#001cff 236px,#6500ff 356px,#fe00ff 524px,#ff00d7 574px,#ff00b5 630px)"></i><i style="top:387px;background:linear-gradient(90deg,#03f 128px,#001bff 236px,#6200ff 354px,#f0f 528px,#ff00d9 574px,#ff00b8 628px)"></i><i style="top:390px;background:linear-gradient(90deg,#0031ff 130px,#001aff 236px,#5f00ff 352px,#fe00ff 530px,#ff00da 576px,#ff00bc 624px)"></i><i style="top:393px;background:linear-gradient(90deg,#0030ff 132px,#0119ff 238px,#5a00ff 348px,#f0f 534px,#f0d 576px,#ff00c0 622px)"></i><i style="top:396px;background:linear-gradient(90deg,#002fff 132px,#0018ff 238px,#5700ff 346px,#fe00ff 536px,#ff00df 576px,#ff00c4 618px)"></i><i style="top:399px;background:linear-gradient(90deg,#002dff 134px,#0017ff 238px,#5300ff 342px,#f0f 540px,#ff00e1 576px,#ff00c7 616px)"></i><i style="top:402px;background:linear-gradient(90deg,#002cff 136px,#0116ff 240px,#5000ff 340px,#fe00ff 542px,#ff00cb 614px)"></i><i style="top:405px;background:linear-gradient(90deg,#002bff 138px,#0115ff 240px,#4c00ff 336px,#a400ff 442px,#f0f 546px,#ff00cf 610px)"></i><i style="top:408px;background:linear-gradient(90deg,#0029ff 140px,#0014ff 240px,#4900ff 334px,#a200ff 442px,#fe00ff 548px,#ff00d3 608px)"></i><i style="top:411px;background:linear-gradient(90deg,#0028ff 142px,#0014ff 240px,#4500ff 330px,#a000ff 442px,#f0f 552px,#ff00d7 604px)"></i><i style="top:414px;background:linear-gradient(90deg,#0026ff 144px,#0112ff 242px,#4300ff 328px,#9e00ff 442px,#fe00ff 554px,#ff00db 602px)"></i><i style="top:417px;background:linear-gradient(90deg,#0025ff 146px,#0112ff 242px,#3f00ff 324px,#9d00ff 442px,#f0f 558px,#ff00e0 598px)"></i><i style="top:420px;background:linear-gradient(90deg,#0024ff 148px,#01f 242px,#3c00ff 322px,#9b00ff 442px,#fe00ff 560px,#ff00e4 596px)"></i><i style="top:423px;background:linear-gradient(90deg,#0023ff 150px,#0010ff 242px,#3800ff 318px,#90f 442px,#f0f 564px,#ff00e9 592px)"></i><i style="top:426px;background:linear-gradient(90deg,#0021ff 152px,#010fff 244px,#3600ff 316px,#90f 444px,#fe00ff 566px,#ff00ed 590px)"></i><i style="top:429px;background:linear-gradient(90deg,#0020ff 154px,#010eff 244px,#3400ff 314px,#9800ff 444px,#f0f 570px,#ff00f2 586px)"></i><i style="top:432px;background:linear-gradient(90deg,#001fff 156px,#000dff 244px,#3000ff 310px,#9600ff 444px,#fe00ff 572px,#ff00f6 584px)"></i><i style="top:435px;background:linear-gradient(90deg,#001eff 158px,#000dff 244px,#2e00ff 308px,#9400ff 444px,#f0f 576px,#ff00fc 580px)"></i><i style="top:438px;background:linear-gradient(90deg,#001cff 160px,#010cff 246px,#2a00ff 304px,#9300ff 444px,#fe00ff 578px)"></i><i style="top:441px;background:linear-gradient(90deg,#001bff 162px,#010bff 246px,#2800ff 302px,#9000ff 442px,#fa00ff 576px)"></i><i style="top:444px;background:linear-gradient(90deg,#001aff 164px,#000aff 246px,#2500ff 298px,#8b00ff 438px,#f400ff 572px)"></i><i style="top:447px;background:linear-gradient(90deg,#0019ff 166px,#000aff 246px,#2300ff 296px,#80f 436px,#f000ff 570px)"></i><i style="top:450px;background:linear-gradient(90deg,#0018ff 168px,#0109ff 248px,#1f00ff 292px,#8400ff 432px,#eb00ff 566px)"></i><i style="top:453px;background:linear-gradient(90deg,#0017ff 170px,#0108ff 248px,#1d00ff 290px,#8100ff 430px,#e700ff 564px)"></i><i style="top:456px;background:linear-gradient(90deg,#0016ff 172px,#0007ff 248px,#1a00ff 286px,#7d00ff 426px,#e200ff 560px)"></i><i style="top:459px;background:linear-gradient(90deg,#0015ff 174px,#0007ff 248px,#1800ff 284px,#7a00ff 424px,#de00ff 558px)"></i><i style="top:462px;background:linear-gradient(90deg,#0014ff 176px,#0106ff 250px,#1500ff 280px,#7600ff 420px,#d900ff 554px)"></i><i style="top:465px;background:linear-gradient(90deg,#0012ff 178px,#0105ff 250px,#1300ff 278px,#7300ff 418px,#d500ff 552px)"></i><i style="top:468px;background:linear-gradient(90deg,#01f 180px,#0005ff 250px,#10f 276px,#6f00ff 414px,#d000ff 548px)"></i><i style="top:471px;background:linear-gradient(90deg,#0010ff 182px,#0004ff 250px,#0e00ff 272px,#6d00ff 412px,#cd00ff 546px)"></i><i style="top:474px;background:linear-gradient(90deg,#000fff 184px,#0103ff 252px,#0d00ff 270px,#6300ff 400px,#ca00ff 544px)"></i><i style="top:477px;background:linear-gradient(90deg,#000eff 186px,#0102ff 252px,#6100ff 398px,#c500ff 540px)"></i><i style="top:480px;background:linear-gradient(90deg,#000dff 188px,#0002ff 252px,#6000ff 398px,#c200ff 538px)"></i><i style="top:483px;background:linear-gradient(90deg,#000cff 192px,#0001ff 252px,#5e00ff 396px,#bd00ff 534px)"></i><i style="top:486px;background:linear-gradient(90deg,#000bff 194px,#0100ff 254px,#5d00ff 396px,#ba00ff 532px)"></i><i style="top:489px;background:linear-gradient(90deg,#000aff 196px,#0100ff 254px,#5a00ff 394px,#b500ff 528px)"></i><i style="top:492px;background:linear-gradient(90deg,#0009ff 198px,#00f 254px,#5800ff 392px,#b200ff 526px)"></i><i style="top:495px;background:linear-gradient(90deg,#0008ff 200px,#00f 254px,#5600ff 390px,#ae00ff 522px)"></i><i style="top:498px;background:linear-gradient(90deg,#0007ff 202px,#00f 254px,#5400ff 388px,#ab00ff 520px)"></i><i style="top:501px;background:linear-gradient(90deg,#0006ff 206px,#0100ff 256px,#a700ff 516px)"></i><i style="top:504px;background:linear-gradient(90deg,#0005ff 208px,#00f 256px,#a400ff 514px)"></i><i style="top:507px;background:linear-gradient(90deg,#0004ff 210px,#00f 256px,#a000ff 510px)"></i><i style="top:510px;background:linear-gradient(90deg,#0004ff 212px,#00f 256px,#9d00ff 508px)"></i><i style="top:513px;background:linear-gradient(90deg,#0003ff 214px,#0100ff 258px,#9b00ff 506px)"></i><i style="top:516px;background:linear-gradient(90deg,#0002ff 218px,#0100ff 258px,#9700ff 502px)"></i><i style="top:519px;background:linear-gradient(90deg,#0001ff 220px,#00f 258px,#9400ff 500px)"></i><i style="top:522px;background:linear-gradient(90deg,#00f 222px,#00f 258px,#9000ff 496px)"></i><i style="top:525px;background:linear-gradient(90deg,#00f 224px,#0100ff 260px,#8e00ff 494px)"></i><i style="top:528px;background:linear-gradient(90deg,#00f 226px,#0100ff 260px,#8a00ff 490px)"></i><i style="top:531px;background:linear-gradient(90deg,#00f 230px,#00f 260px,#80f 488px)"></i><i style="top:534px;background:linear-gradient(90deg,#00f 232px,#00f 260px,#8400ff 484px)"></i><i style="top:537px;background:linear-gradient(90deg,#00f 236px,#0100ff 262px,#8200ff 482px)"></i><i style="top:540px;background:linear-gradient(90deg,#00f 238px,#0100ff 262px,#7e00ff 478px)"></i><i style="top:543px;background:linear-gradient(90deg,#00f 240px,#00f 262px,#7c00ff 476px)"></i><i style="top:546px;background:linear-gradient(90deg,#00f 242px,#00f 262px,#7800ff 472px)"></i><i style="top:549px;background:linear-gradient(90deg,#00f 246px,#0100ff 264px,#7600ff 470px)"></i><i style="top:552px;background:linear-gradient(90deg,#00f 248px,#0100ff 264px,#7400ff 468px)"></i><i style="top:555px;background:linear-gradient(90deg,#00f 252px,#00f 264px,#7100ff 464px)"></i><i style="top:558px;background:linear-gradient(90deg,#00f 254px,#00f 264px,#6f00ff 462px)"></i><i style="top:561px;background:linear-gradient(90deg,#00f 258px,#0500ff 274px,#6b00ff 458px)"></i><i style="top:564px;background:linear-gradient(90deg,#00f 260px,#0e00ff 292px,#6900ff 456px)"></i><i style="top:567px;background:linear-gradient(90deg,#00f 264px,#60f 452px)"></i><i style="top:570px;background:linear-gradient(90deg,#00f 266px,#6400ff 450px)"></i><i style="top:573px;background:linear-gradient(90deg,#0200ff 270px,#6100ff 446px)"></i><i style="top:576px;background:linear-gradient(90deg,#0300ff 272px,#5f00ff 444px)"></i><i style="top:579px;background:linear-gradient(90deg,#0400ff 276px,#5c00ff 440px)"></i><i style="top:582px;background:linear-gradient(90deg,#0600ff 280px,#5a00ff 438px)"></i><i style="top:585px;background:linear-gradient(90deg,#0700ff 282px,#5700ff 434px)"></i><i style="top:588px;background:linear-gradient(90deg,#0900ff 286px,#50f 432px)"></i><i style="top:591px;background:linear-gradient(90deg,#0a00ff 290px,#5400ff 430px)"></i><i style="top:594px;background:linear-gradient(90deg,#0c00ff 294px,#5100ff 426px)"></i><i style="top:597px;background:linear-gradient(90deg,#0d00ff 296px,#4f00ff 424px)"></i><i style="top:600px;background:linear-gradient(90deg,#0f00ff 300px,#4c00ff 420px)"></i><i style="top:603px;background:linear-gradient(90deg,#1000ff 304px,#4a00ff 418px)"></i><i style="top:606px;background:linear-gradient(90deg,#1200ff 308px,#4800ff 414px)"></i><i style="top:609px;background:linear-gradient(90deg,#1400ff 312px,#4600ff 412px)"></i><i style="top:612px;background:linear-gradient(90deg,#1500ff 316px,#4300ff 408px)"></i><i style="top:615px;background:linear-gradient(90deg,#1600ff 318px,#4200ff 406px)"></i><i style="top:618px;background:linear-gradient(90deg,#1700ff 322px,#3f00ff 402px)"></i><i style="top:621px;background:linear-gradient(90deg,#1900ff 326px,#3e00ff 400px)"></i><i style="top:624px;background:linear-gradient(90deg,#1b00ff 330px,#3b00ff 396px)"></i><i style="top:627px;background:linear-gradient(90deg,#1c00ff 334px,#3a00ff 394px)"></i><i style="top:630px;background:linear-gradient(90deg,#1d00ff 336px,#3800ff 392px)"></i><i style="top:633px;background:linear-gradient(90deg,#1e00ff 340px,#3600ff 388px)"></i><i style="top:636px;background:linear-gradient(90deg,#2000ff 344px,#3400ff 386px)"></i><i style="top:639px;background:linear-gradient(90deg,#2100ff 348px,#3200ff 382px)"></i><i style="top:642px;background:linear-gradient(90deg,#20f 350px,#3000ff 380px)"></i><i style="top:645px;background:linear-gradient(90deg,#2300ff 354px,#2e00ff 376px)"></i><i style="top:648px;background:linear-gradient(90deg,#2500ff 358px,#2c00ff 374px)"></i>
</div></div>
<svg style="position:absolute;left:1679.0px;top:291px" width="866" height="666" viewBox="0 0 866 666"><path d="M1 1H865V665H1ZM370.2 647.9L370.1 647.8L370.0 647.8L369.9 647.9L369.8 648.0L369.6 648.0L369.3 648.0L369.1 647.9L368.9 648.1L368.8 648.3L368.7 648.5L368.5 648.5L368.1 648.5L367.7 648.5L367.3 648.5L366.8 648.5L366.4 648.5L365.9 648.4L365.3 648.3L364.6 648.0L363.5 647.4L362.2 646.6L360.7 645.5L358.9 644.3L357.0 642.8L354.7 641.0L352.1 639.0L349.1 636.6L345.9 633.9L342.3 630.8L338.4 627.5L334.1 623.9L329.3 619.9L323.9 615.5L318.0 610.6L311.5 605.2L304.5 599.5L297.0 593.2L288.8 586.2L280.0 578.4L270.5 569.6L260.4 559.9L249.5 548.6L237.2 535.0L223.2 518.3L207.7 498.9L191.4 477.1L174.2 452.8L156.2 425.9L137.9 396.8L119.4 366.2L101.1 334.6L83.5 302.6L67.3 270.7L53.1 239.7L40.6 210.2L29.8 182.5L20.9 157.3L13.8 134.9L8.6 115.1L5.0 97.9L2.8 83.0L2.0 70.2L2.4 59.2L4.0 49.7L6.7 41.6L10.4 34.9L15.1 29.4L20.5 25.1L26.7 22.0L33.3 19.7L40.5 18.2L48.0 17.3L55.9 16.7L64.0 16.4L72.2 16.3L80.3 16.3L88.6 16.4L96.9 16.7L105.4 17.0L114.2 17.5L123.2 18.1L132.5 18.8L142.2 19.6L152.1 20.5L162.4 21.5L173.2 22.5L184.4 23.7L196.0 24.9L208.1 26.2L220.7 27.5L233.8 29.0L247.5 30.5L261.7 32.1L276.6 33.8L292.0 35.5L308.0 37.4L324.6 39.3L341.9 41.2L359.7 43.3L378.1 45.4L397.1 47.6L416.6 49.8L436.6 52.1L457.0 54.5L477.8 56.8L498.9 59.3L520.1 61.7L540.9 64.1L561.4 66.5L581.6 68.8L601.8 71.1L621.6 73.4L640.7 75.6L658.9 77.6L676.2 79.6L692.8 81.5L708.4 83.3L723.2 85.0L737.0 86.6L749.8 88.1L761.8 89.4L773.0 90.7L783.3 91.9L793.0 93.0L802.1 94.1L810.8 95.1L819.0 96.0L826.6 96.9L833.7 97.7L840.4 98.5L846.5 99.2L852.1 99.8L857.1 100.4L861.6 100.9L865.5 101.4L869.2 101.8L872.5 102.2L875.5 102.5L878.1 102.8L880.4 103.1L882.3 103.3L883.9 103.5L885.4 103.6L886.8 103.8L888.1 104.0L889.3 104.1L890.4 104.2L891.4 104.3L892.5 104.5L893.6 104.6L894.6 104.7L895.6 104.8L896.4 104.9L897.0 105.0L897.4 105.0L897.7 105.1L898.0 105.1L898.3 105.1L898.5 105.1L898.5 105.2L898.5 105.2Z" fill="#222" fill-rule="evenodd"/><path d="M370.2 647.9L370.1 647.8L370.0 647.8L369.9 647.9L369.8 648.0L369.6 648.0L369.3 648.0L369.1 647.9L368.9 648.1L368.8 648.3L368.7 648.5L368.5 648.5L368.1 648.5L367.7 648.5L367.3 648.5L366.8 648.5L366.4 648.5L365.9 648.4L365.3 648.3L364.6 648.0L363.5 647.4L362.2 646.6L360.7 645.5L358.9 644.3L357.0 642.8L354.7 641.0L352.1 639.0L349.1 636.6L345.9 633.9L342.3 630.8L338.4 627.5L334.1 623.9L329.3 619.9L323.9 615.5L318.0 610.6L311.5 605.2L304.5 599.5L297.0 593.2L288.8 586.2L280.0 578.4L270.5 569.6L260.4 559.9L249.5 548.6L237.2 535.0L223.2 518.3L207.7 498.9L191.4 477.1L174.2 452.8L156.2 425.9L137.9 396.8L119.4 366.2L101.1 334.6L83.5 302.6L67.3 270.7L53.1 239.7L40.6 210.2L29.8 182.5L20.9 157.3L13.8 134.9L8.6 115.1L5.0 97.9L2.8 83.0L2.0 70.2L2.4 59.2L4.0 49.7L6.7 41.6L10.4 34.9L15.1 29.4L20.5 25.1L26.7 22.0L33.3 19.7L40.5 18.2L48.0 17.3L55.9 16.7L64.0 16.4L72.2 16.3L80.3 16.3L88.6 16.4L96.9 16.7L105.4 17.0L114.2 17.5L123.2 18.1L132.5 18.8L142.2 19.6L152.1 20.5L162.4 21.5L173.2 22.5L184.4 23.7L196.0 24.9L208.1 26.2L220.7 27.5L233.8 29.0L247.5 30.5L261.7 32.1L276.6 33.8L292.0 35.5L308.0 37.4L324.6 39.3L341.9 41.2L359.7 43.3L378.1 45.4L397.1 47.6L416.6 49.8L436.6 52.1L457.0 54.5L477.8 56.8L498.9 59.3L520.1 61.7L540.9 64.1L561.4 66.5L581.6 68.8L601.8 71.1L621.6 73.4L640.7 75.6L658.9 77.6L676.2 79.6L692.8 81.5L708.4 83.3L723.2 85.0L737.0 86.6L749.8 88.1L761.8 89.4L773.0 90.7L783.3 91.9L793.0 93.0L802.1 94.1L810.8 95.1L819.0 96.0L826.6 96.9L833.7 97.7L840.4 98.5L846.5 99.2L852.1 99.8L857.1 100.4L861.6 100.9L865.5 101.4L869.2 101.8L872.5 102.2L875.5 102.5L878.1 102.8L880.4 103.1L882.3 103.3L883.9 103.5L885.4 103.6L886.8 103.8L888.1 104.0L889.3 104.1L890.4 104.2L891.4 104.3L892.5 104.5L893.6 104.6L894.6 104.7L895.6 104.8L896.4 104.9L897.0 105.0L897.4 105.0L897.7 105.1L898.0 105.1L898.3 105.1L898.5 105.1L898.5 105.2L898.5 105.2ZM649.6 87.0L180.2 43.1L252.8 491.2Z" fill="#000" fill-opacity=".4" fill-rule="evenodd"/><rect x="169.8" y="30.6" width="18.4" height="18.4" fill="none" stroke="#fff" stroke-width="2.2"/><rect x="283.4" y="41.5" width="18.4" height="18.4" fill="none" stroke="#fff" stroke-width="2.2"/><rect x="320.8" y="47.2" width="18.4" height="18.4" fill="none" stroke="#fff" stroke-width="2.2"/><rect x="362.8" y="56.5" width="18.4" height="18.4" fill="none" stroke="#fff" stroke-width="2.2"/><rect x="421.8" y="62.2" width="18.4" height="18.4" fill="none" stroke="#fff" stroke-width="2.2"/><rect x="639.8" y="74.7" width="18.4" height="18.4" fill="none" stroke="#fff" stroke-width="2.2"/><rect x="256.4" y="52.4" width="18.4" height="18.4" fill="none" stroke="#fff" stroke-width="2.2"/><rect x="202.5" y="63.3" width="18.4" height="18.4" fill="none" stroke="#fff" stroke-width="2.2"/><rect x="253.3" y="83.0" width="18.4" height="18.4" fill="none" stroke="#fff" stroke-width="2.2"/><rect x="340.5" y="100.6" width="18.4" height="18.4" fill="none" stroke="#fff" stroke-width="2.2"/><rect x="326.0" y="108.9" width="18.4" height="18.4" fill="none" stroke="#fff" stroke-width="2.2"/><rect x="530.9" y="102.7" width="18.4" height="18.4" fill="none" stroke="#fff" stroke-width="2.2"/><rect x="447.4" y="119.3" width="18.4" height="18.4" fill="none" stroke="#fff" stroke-width="2.2"/><rect x="211.3" y="124.5" width="18.4" height="18.4" fill="none" stroke="#fff" stroke-width="2.2"/><rect x="189.0" y="150.4" width="18.4" height="18.4" fill="none" stroke="#fff" stroke-width="2.2"/><rect x="196.8" y="192.5" width="18.4" height="18.4" fill="none" stroke="#fff" stroke-width="2.2"/><rect x="243.5" y="188.8" width="18.4" height="18.4" fill="none" stroke="#fff" stroke-width="2.2"/><rect x="270.5" y="196.6" width="18.4" height="18.4" fill="none" stroke="#fff" stroke-width="2.2"/><rect x="403.8" y="181.6" width="18.4" height="18.4" fill="none" stroke="#fff" stroke-width="2.2"/><rect x="318.7" y="220.5" width="18.4" height="18.4" fill="none" stroke="#fff" stroke-width="2.2"/><rect x="246.6" y="261.0" width="18.4" height="18.4" fill="none" stroke="#fff" stroke-width="2.2"/><rect x="429.7" y="288.5" width="18.4" height="18.4" fill="none" stroke="#fff" stroke-width="2.2"/><rect x="246.6" y="328.9" width="18.4" height="18.4" fill="none" stroke="#fff" stroke-width="2.2"/><rect x="244.0" y="479.9" width="18.4" height="18.4" fill="none" stroke="#fff" stroke-width="2.2"/><rect x="274.6" y="135.4" width="18.4" height="18.4" fill="none" stroke="#000" stroke-width="2.4"/><circle cx="217.4" cy="45.0" r="5.7" fill="#00ff00" stroke="#000" stroke-width="1.5"/><circle cx="304.0" cy="52.2" r="5.7" fill="#ffff00" stroke="#000" stroke-width="1.5"/><circle cx="330.0" cy="56.4" r="5.7" fill="#e6c41e" stroke="#000" stroke-width="1.5"/><circle cx="372.5" cy="63.7" r="5.7" fill="#e0a030" stroke="#000" stroke-width="1.5"/><circle cx="431.2" cy="71.4" r="5.7" fill="#d87828" stroke="#000" stroke-width="1.5"/><circle cx="533.9" cy="78.2" r="5.7" fill="#f40000" stroke="#000" stroke-width="1.5"/><circle cx="263.6" cy="61.6" r="5.7" fill="#a0b840" stroke="#000" stroke-width="1.5"/><circle cx="219.5" cy="73.0" r="5.7" fill="#4a9448" stroke="#000" stroke-width="1.5"/><circle cx="261.5" cy="92.7" r="5.7" fill="#5a6b40" stroke="#000" stroke-width="1.5"/><circle cx="350.2" cy="109.8" r="5.7" fill="#735244" stroke="#000" stroke-width="1.5"/><circle cx="333.6" cy="115.5" r="5.7" fill="#c29682" stroke="#000" stroke-width="1.5"/><circle cx="505.3" cy="102.0" r="5.7" fill="#b03040" stroke="#000" stroke-width="1.5"/><circle cx="453.5" cy="126.4" r="5.7" fill="#c0505c" stroke="#000" stroke-width="1.5"/><circle cx="219.5" cy="133.2" r="5.7" fill="#66bbaa" stroke="#000" stroke-width="1.5"/><circle cx="270.8" cy="143.6" r="5.7" fill="#000000" stroke="#000" stroke-width="1.5"/><circle cx="282.8" cy="145.0" r="5.7" fill="#b8b8b8" stroke="#000" stroke-width="1.5"/><circle cx="282.8" cy="143.6" r="5.7" fill="#a0a0a0" stroke="#000" stroke-width="1.5"/><circle cx="219.5" cy="159.1" r="5.7" fill="#00ffff" stroke="#000" stroke-width="1.5"/><circle cx="219.5" cy="193.9" r="5.7" fill="#0088a8" stroke="#000" stroke-width="1.5"/><circle cx="251.1" cy="196.5" r="5.7" fill="#5e7c9e" stroke="#000" stroke-width="1.5"/><circle cx="278.6" cy="200.6" r="5.7" fill="#8580b0" stroke="#000" stroke-width="1.5"/><circle cx="405.2" cy="185.1" r="5.7" fill="#bb5598" stroke="#000" stroke-width="1.5"/><circle cx="307.7" cy="229.2" r="5.7" fill="#5c3c6c" stroke="#000" stroke-width="1.5"/><circle cx="346.0" cy="244.2" r="5.7" fill="#ff00ff" stroke="#000" stroke-width="1.5"/><circle cx="250.6" cy="262.9" r="5.7" fill="#4858a8" stroke="#000" stroke-width="1.5"/><circle cx="250.6" cy="312.2" r="5.7" fill="#303c98" stroke="#000" stroke-width="1.5"/><circle cx="239.2" cy="337.6" r="5.7" fill="#0000ff" stroke="#000" stroke-width="1.5"/></svg>
<div style="left:2263.5px;top:719.5px;width:276px;height:184px;background:#2e2e2e"></div>
<div class="cie" style="left:2267px;top:723px;width:269px;height:177px;border:2px solid #8e8e8e;overflow:hidden"><div style="left:-2px;top:-2px;width:269px;height:177px" class="in">
<i style="top:0px;background:linear-gradient(90deg,#b0ff00 0px,#ff0 214px,#ffeb00 269px)"></i><i style="top:3px;background:linear-gradient(90deg,#b0ff00 0px,#ff0 212px,#ffea00 269px)"></i><i style="top:6px;background:linear-gradient(90deg,#b1ff00 0px,#ff0 208px,#ffe900 269px)"></i><i style="top:9px;background:linear-gradient(90deg,#b2ff00 0px,#ff0 206px,#ffe800 269px)"></i><i style="top:12px;background:linear-gradient(90deg,#b3ff00 0px,#ff0 204px,#ffe700 269px)"></i><i style="top:15px;background:linear-gradient(90deg,#b4ff00 0px,#ff0 200px,#ffe600 269px)"></i><i style="top:18px;background:linear-gradient(90deg,#b5ff00 0px,#ff0 198px,#ffe500 269px)"></i><i style="top:21px;background:linear-gradient(90deg,#b5ff01 0px,#ff0 196px,#ffe400 269px)"></i><i style="top:24px;background:linear-gradient(90deg,#b6ff01 0px,#ff0 192px,#ffe300 269px)"></i><i style="top:27px;background:linear-gradient(90deg,#b7ff02 0px,#ff0 190px,#ffe200 269px)"></i><i style="top:30px;background:linear-gradient(90deg,#b8ff02 0px,#ff0 186px,#ffe100 269px)"></i><i style="top:33px;background:linear-gradient(90deg,#b9ff02 0px,#c4ff00 32px,#ff0 184px,#ffe000 269px)"></i><i style="top:36px;background:linear-gradient(90deg,#baff03 0px,#c8ff00 38px,#ff0 182px,#ffdf00 269px)"></i><i style="top:39px;background:linear-gradient(90deg,#bbff03 0px,#caff00 42px,#ff0 178px,#ffde00 269px)"></i><i style="top:42px;background:linear-gradient(90deg,#bbff04 0px,#cdff00 48px,#ff0 176px,#fd0 269px)"></i><i style="top:45px;background:linear-gradient(90deg,#bcff04 0px,#d0ff00 54px,#ff0 174px,#ffdc00 269px)"></i><i style="top:48px;background:linear-gradient(90deg,#bdff05 0px,#d3ff00 60px,#ff0 170px,#ffdb00 269px)"></i><i style="top:51px;background:linear-gradient(90deg,#beff05 0px,#d7ff00 66px,#ff0 168px,#ffda00 269px)"></i><i style="top:54px;background:linear-gradient(90deg,#bfff06 0px,#daff00 72px,#ff0 164px,#ffd900 269px)"></i><i style="top:57px;background:linear-gradient(90deg,#c0ff06 0px,#df0 76px,#ff0 162px,#ffd800 269px)"></i><i style="top:60px;background:linear-gradient(90deg,#c1ff07 0px,#e0ff00 82px,#ff0 160px,#ffd700 269px)"></i><i style="top:63px;background:linear-gradient(90deg,#c2ff07 0px,#e3ff00 88px,#ff0 156px,#ffd700 269px)"></i><i style="top:66px;background:linear-gradient(90deg,#c3ff08 0px,#e7ff00 94px,#ff0 154px,#ffd600 269px)"></i><i style="top:69px;background:linear-gradient(90deg,#c4ff08 0px,#eaff00 100px,#ff0 152px,#ffd500 269px)"></i><i style="top:72px;background:linear-gradient(90deg,#c4ff09 0px,#ef0 106px,#ff0 148px,#ffd400 269px)"></i><i style="top:75px;background:linear-gradient(90deg,#c5ff09 0px,#f0ff00 110px,#ff0 146px,#ffd300 269px)"></i><i style="top:78px;background:linear-gradient(90deg,#c6ff0a 0px,#ff0 144px,#ffd200 269px)"></i><i style="top:81px;background:linear-gradient(90deg,#c7ff0a 0px,#ff0 140px,#ffd100 269px)"></i><i style="top:84px;background:linear-gradient(90deg,#c8ff0b 0px,#ff0 138px,#ffd000 269px)"></i><i style="top:87px;background:linear-gradient(90deg,#c9ff0b 0px,#ff0 134px,#ffcf00 269px)"></i><i style="top:90px;background:linear-gradient(90deg,#caff0c 0px,#ffff01 132px,#ffce00 269px)"></i><i style="top:93px;background:linear-gradient(90deg,#cbff0c 0px,#ffff01 130px,#ffe500 196px,#ffcd00 269px)"></i><i style="top:96px;background:linear-gradient(90deg,#ccff0d 0px,#ffff02 126px,#ffe400 196px,#fc0 269px)"></i><i style="top:99px;background:linear-gradient(90deg,#cdff0d 0px,#ffff03 124px,#fff100 158px,#fc0 269px)"></i><i style="top:102px;background:linear-gradient(90deg,#ceff0e 0px,#ffff04 122px,#fe0 164px,#ffcb00 269px)"></i><i style="top:105px;background:linear-gradient(90deg,#cfff0e 0px,#ffff05 118px,#ffeb00 168px,#ffca00 269px)"></i><i style="top:108px;background:linear-gradient(90deg,#d0ff0f 0px,#ffff05 116px,#ffe800 174px,#ffc900 269px)"></i><i style="top:111px;background:linear-gradient(90deg,#d1ff10 0px,#ffff06 112px,#ffe500 180px,#ffc800 269px)"></i><i style="top:114px;background:linear-gradient(90deg,#d2ff10 0px,#ffff07 110px,#ffe200 186px,#ffc700 269px)"></i><i style="top:117px;background:linear-gradient(90deg,#d3ff11 0px,#ffff08 108px,#ffde00 192px,#ffc600 269px)"></i><i style="top:120px;background:linear-gradient(90deg,#d4ff11 0px,#ffff08 104px,#ffdb00 198px,#ffc500 269px)"></i><i style="top:123px;background:linear-gradient(90deg,#d5ff12 0px,#ffff09 102px,#ffd900 202px,#ffc400 269px)"></i><i style="top:126px;background:linear-gradient(90deg,#d6ff12 0px,#ffff0a 100px,#ffd600 208px,#ffc300 269px)"></i><i style="top:129px;background:linear-gradient(90deg,#d7ff13 0px,#ffff0b 96px,#ffd300 214px,#ffc300 269px)"></i><i style="top:132px;background:linear-gradient(90deg,#d8ff13 0px,#ffff0b 94px,#ffdf04 176px,#ffc200 269px)"></i><i style="top:135px;background:linear-gradient(90deg,#d9ff14 0px,#fffe0c 92px,#ffde04 176px,#ffc100 269px)"></i><i style="top:138px;background:linear-gradient(90deg,#daff14 0px,#ffff0d 88px,#ffde05 174px,#ffc000 269px)"></i><i style="top:141px;background:linear-gradient(90deg,#dbff15 0px,#ffff0e 86px,#ffdd05 172px,#ffbf00 269px)"></i><i style="top:144px;background:linear-gradient(90deg,#dcff16 0px,#ffff0f 82px,#ffdc06 172px,#ffbe00 269px)"></i><i style="top:147px;background:linear-gradient(90deg,#ddff16 0px,#ffff10 80px,#ffdc06 170px,#ffbd00 269px)"></i><i style="top:150px;background:linear-gradient(90deg,#deff17 0px,#ffff10 78px,#ffdc07 168px,#ffbc00 269px)"></i><i style="top:153px;background:linear-gradient(90deg,#dfff17 0px,#ff1 74px,#ffdb08 166px,#ffbc00 269px)"></i><i style="top:156px;background:linear-gradient(90deg,#e1ff18 0px,#ffff12 72px,#ffdb08 164px,#fb0 269px)"></i><i style="top:159px;background:linear-gradient(90deg,#e2ff19 0px,#fffe13 70px,#ffda09 164px,#ffba00 269px)"></i><i style="top:162px;background:linear-gradient(90deg,#e3ff19 0px,#ffff14 66px,#ffda09 162px,#ffb901 269px)"></i><i style="top:165px;background:linear-gradient(90deg,#e4ff1a 0px,#ffff14 64px,#ffd90a 160px,#ffb801 269px)"></i><i style="top:168px;background:linear-gradient(90deg,#e5ff1a 0px,#ffff15 60px,#ffd90b 158px,#ffb701 269px)"></i><i style="top:171px;background:linear-gradient(90deg,#e6ff1b 0px,#ffff16 58px,#ffd90b 156px,#ffb602 269px)"></i><i style="top:174px;background:linear-gradient(90deg,#e7ff1c 0px,#fffe17 56px,#ffd80c 156px,#ffb602 269px)"></i>
</div></div>
<svg style="position:absolute;left:2267px;top:723px" width="269" height="177" viewBox="0 0 269 177"><path d="M0 0H269V158.8L0 18.2Z" fill="#000" fill-opacity=".4"/><rect x="125.1" y="79.0" width="18" height="18" fill="none" stroke="#fff" stroke-width="2"/><circle cx="178.6" cy="117.7" r="5.7" fill="#ffff00" stroke="#000" stroke-width="1.5"/></svg>
<div style="left:2199px;top:913px;width:341.5px;height:37px;background:#323232"></div>
<span style="left:2200.5px;top:915.4px;font-size:27.6px;line-height:33px;letter-spacing:-0.44px;color:#f4f4f4;">RGB Triplet: 255, 255, 0</span>
<!-- bottom -->
<span style="left:369.2px;top:1011.1px;font-size:38.5px;line-height:46px;letter-spacing:0.71px;color:#f4f4f4;">Avg dE2000: 3.28</span>
<span style="left:352.3px;top:1066.2px;font-size:38.5px;line-height:46px;letter-spacing:1.18px;color:#f4f4f4;">Max dE2000: 23.11</span>
<span style="left:320.9px;top:1129.7px;font-size:38.5px;line-height:46px;letter-spacing:0.96px;color:#f4f4f4;">Current Reading</span>
<span style="left:320.9px;top:1186.0px;font-size:31.6px;line-height:38px;letter-spacing:1.12px;color:#f4f4f4;">x: 0.4277</span>
<span style="left:532.4px;top:1186.0px;font-size:31.6px;line-height:38px;letter-spacing:1.25px;color:#f4f4f4;">y: 0.4968</span>
<span style="left:320.9px;top:1240.3px;font-size:31.6px;line-height:38px;letter-spacing:0.94px;color:#f4f4f4;">fL: 73.85</span>
<span style="left:320.9px;top:1286.5px;font-size:31.6px;line-height:38px;letter-spacing:1.82px;color:#f4f4f4;">cd/m²: 253.01</span>
<div style="left:735.5px;top:1024px;width:1821.5px;height:307px;background:#404040;border:1.5px solid #0a0a0a;overflow:hidden">
<div style="left:0;top:0;width:1830px;height:33.3px;background:linear-gradient(#303030,#2c2c2c 45%,#181818 50%,#111)"></div>
<div style="left:0;top:33.3px;width:1830px;height:31.8px;background:#404040"></div>
<div style="left:0;top:65.1px;width:1830px;height:31.1px;background:#808080"></div>
<div style="left:0;top:96.2px;width:1830px;height:31.8px;background:#404040"></div>
<div style="left:0;top:128.0px;width:1830px;height:31.1px;background:#808080"></div>
<div style="left:0;top:159.1px;width:1830px;height:31.8px;background:#404040"></div>
<div style="left:0;top:190.9px;width:1830px;height:31.5px;background:#808080"></div>
<div style="left:0;top:222.4px;width:1830px;height:31.1px;background:#404040"></div>
<div style="left:0;top:253.5px;width:1830px;height:31.7px;background:#808080"></div>
<div style="left:1100.0px;top:128.5px;width:89.5px;height:30px;background:#f0f0f0;border:1px solid #fff"></div>
<span style="left:230.1px;top:6.3px;font-size:18.5px;line-height:22px;transform:scaleX(1.391);transform-origin:0 0;color:#fff;">White</span>
<span style="left:314.0px;top:6.3px;font-size:18.5px;line-height:22px;transform:scaleX(1.272);transform-origin:0 0;color:#fff;">Gray 80</span>
<span style="left:410.2px;top:6.3px;font-size:18.5px;line-height:22px;transform:scaleX(1.260);transform-origin:0 0;color:#fff;">Gray 65</span>
<span style="left:505.6px;top:6.3px;font-size:18.5px;line-height:22px;transform:scaleX(1.272);transform-origin:0 0;color:#fff;">Gray 50</span>
<span style="left:601.8px;top:6.3px;font-size:18.5px;line-height:22px;transform:scaleX(1.254);transform-origin:0 0;color:#fff;">Gray 35</span>
<span style="left:701.3px;top:6.3px;font-size:18.5px;line-height:22px;transform:scaleX(1.245);transform-origin:0 0;color:#fff;">Black</span>
<span style="left:773.8px;top:6.3px;font-size:18.5px;line-height:22px;transform:scaleX(1.251);transform-origin:0 0;color:#fff;">Dark Skin</span>
<span style="left:887.4px;top:6.3px;font-size:18.5px;line-height:22px;transform:scaleX(1.270);transform-origin:0 0;color:#fff;">Light Skin</span>
<span style="left:1003.9px;top:6.3px;font-size:18.5px;line-height:22px;transform:scaleX(1.237);transform-origin:0 0;color:#fff;">Blue Sky</span>
<span style="left:1106.4px;top:6.3px;font-size:18.5px;line-height:22px;transform:scaleX(1.274);transform-origin:0 0;color:#fff;">Foliage</span>
<span style="left:1196.2px;top:6.3px;font-size:18.5px;line-height:22px;transform:scaleX(1.304);transform-origin:0 0;color:#fff;">Blue Flower</span>
<span style="left:1336.9px;top:6.3px;font-size:18.5px;line-height:22px;transform:scaleX(1.276);transform-origin:0 0;color:#fff;">Bluish Green</span>
<span style="left:1486.7px;top:6.3px;font-size:18.5px;line-height:22px;transform:scaleX(1.271);transform-origin:0 0;color:#fff;">Orange</span>
<span style="left:1578.4px;top:6.3px;font-size:18.5px;line-height:22px;transform:scaleX(1.294);transform-origin:0 0;color:#fff;">Purplish Blue</span>
<span style="left:1732.7px;top:6.3px;font-size:18.5px;line-height:22px;transform:scaleX(1.207);transform-origin:0 0;color:#fff;">Moderate Red</span>
<span style="left:20.0px;top:40.1px;font-size:19.4px;line-height:23px;transform:scaleX(1.315);transform-origin:0 0;color:#fff;font-weight:bold;">x: CIE31</span>
<span style="left:224.5px;top:40.1px;font-size:19.4px;line-height:23px;transform:scaleX(1.260);transform-origin:0 0;color:#fff;">0.31</span>
<span style="left:314.8px;top:40.1px;font-size:19.4px;line-height:23px;transform:scaleX(1.260);transform-origin:0 0;color:#fff;">0.31</span>
<span style="left:411.0px;top:40.1px;font-size:19.4px;line-height:23px;transform:scaleX(1.260);transform-origin:0 0;color:#fff;">0.31</span>
<span style="left:506.4px;top:40.1px;font-size:19.4px;line-height:23px;transform:scaleX(1.260);transform-origin:0 0;color:#fff;">0.31</span>
<span style="left:602.6px;top:40.1px;font-size:19.4px;line-height:23px;transform:scaleX(1.260);transform-origin:0 0;color:#fff;">0.31</span>
<span style="left:698.4px;top:40.1px;font-size:19.4px;line-height:23px;transform:scaleX(1.260);transform-origin:0 0;color:#fff;">0.30</span>
<span style="left:774.6px;top:40.1px;font-size:19.4px;line-height:23px;transform:scaleX(1.260);transform-origin:0 0;color:#fff;">0.40</span>
<span style="left:888.2px;top:40.1px;font-size:19.4px;line-height:23px;transform:scaleX(1.260);transform-origin:0 0;color:#fff;">0.38</span>
<span style="left:1004.7px;top:40.1px;font-size:19.4px;line-height:23px;transform:scaleX(1.260);transform-origin:0 0;color:#fff;">0.25</span>
<span style="left:1107.2px;top:40.1px;font-size:19.4px;line-height:23px;transform:scaleX(1.260);transform-origin:0 0;color:#fff;">0.34</span>
<span style="left:1197.0px;top:40.1px;font-size:19.4px;line-height:23px;transform:scaleX(1.260);transform-origin:0 0;color:#fff;">0.27</span>
<span style="left:1337.7px;top:40.1px;font-size:19.4px;line-height:23px;transform:scaleX(1.260);transform-origin:0 0;color:#fff;">0.26</span>
<span style="left:1487.5px;top:40.1px;font-size:19.4px;line-height:23px;transform:scaleX(1.260);transform-origin:0 0;color:#fff;">0.51</span>
<span style="left:1579.2px;top:40.1px;font-size:19.4px;line-height:23px;transform:scaleX(1.260);transform-origin:0 0;color:#fff;">0.22</span>
<span style="left:1733.5px;top:40.1px;font-size:19.4px;line-height:23px;transform:scaleX(1.260);transform-origin:0 0;color:#fff;">0.46</span>
<span style="left:20.0px;top:71.5px;font-size:19.4px;line-height:23px;transform:scaleX(1.315);transform-origin:0 0;color:#e6e6e6;font-weight:bold;">y: CIE31</span>
<span style="left:224.5px;top:71.5px;font-size:19.4px;line-height:23px;transform:scaleX(1.260);transform-origin:0 0;color:#e6e6e6;">0.33</span>
<span style="left:314.8px;top:71.5px;font-size:19.4px;line-height:23px;transform:scaleX(1.260);transform-origin:0 0;color:#e6e6e6;">0.33</span>
<span style="left:411.0px;top:71.5px;font-size:19.4px;line-height:23px;transform:scaleX(1.260);transform-origin:0 0;color:#e6e6e6;">0.33</span>
<span style="left:506.4px;top:71.5px;font-size:19.4px;line-height:23px;transform:scaleX(1.260);transform-origin:0 0;color:#e6e6e6;">0.33</span>
<span style="left:602.6px;top:71.5px;font-size:19.4px;line-height:23px;transform:scaleX(1.260);transform-origin:0 0;color:#e6e6e6;">0.33</span>
<span style="left:698.4px;top:71.5px;font-size:19.4px;line-height:23px;transform:scaleX(1.260);transform-origin:0 0;color:#e6e6e6;">0.33</span>
<span style="left:774.6px;top:71.5px;font-size:19.4px;line-height:23px;transform:scaleX(1.260);transform-origin:0 0;color:#e6e6e6;">0.37</span>
<span style="left:888.2px;top:71.5px;font-size:19.4px;line-height:23px;transform:scaleX(1.260);transform-origin:0 0;color:#e6e6e6;">0.36</span>
<span style="left:1004.7px;top:71.5px;font-size:19.4px;line-height:23px;transform:scaleX(1.260);transform-origin:0 0;color:#e6e6e6;">0.27</span>
<span style="left:1107.2px;top:71.5px;font-size:19.4px;line-height:23px;transform:scaleX(1.260);transform-origin:0 0;color:#e6e6e6;">0.42</span>
<span style="left:1197.0px;top:71.5px;font-size:19.4px;line-height:23px;transform:scaleX(1.260);transform-origin:0 0;color:#e6e6e6;">0.26</span>
<span style="left:1337.7px;top:71.5px;font-size:19.4px;line-height:23px;transform:scaleX(1.260);transform-origin:0 0;color:#e6e6e6;">0.36</span>
<span style="left:1487.5px;top:71.5px;font-size:19.4px;line-height:23px;transform:scaleX(1.260);transform-origin:0 0;color:#e6e6e6;">0.41</span>
<span style="left:1579.2px;top:71.5px;font-size:19.4px;line-height:23px;transform:scaleX(1.260);transform-origin:0 0;color:#e6e6e6;">0.20</span>
<span style="left:1733.5px;top:71.5px;font-size:19.4px;line-height:23px;transform:scaleX(1.260);transform-origin:0 0;color:#e6e6e6;">0.32</span>
<span style="left:20.0px;top:103.0px;font-size:19.4px;line-height:23px;transform:scaleX(1.315);transform-origin:0 0;color:#fff;font-weight:bold;">Y</span>
<span style="left:224.5px;top:103.0px;font-size:19.4px;line-height:23px;transform:scaleX(1.260);transform-origin:0 0;color:#fff;">315.41</span>
<span style="left:314.8px;top:103.0px;font-size:19.4px;line-height:23px;transform:scaleX(1.260);transform-origin:0 0;color:#fff;">250.35</span>
<span style="left:411.0px;top:103.0px;font-size:19.4px;line-height:23px;transform:scaleX(1.260);transform-origin:0 0;color:#fff;">202.03</span>
<span style="left:506.4px;top:103.0px;font-size:19.4px;line-height:23px;transform:scaleX(1.260);transform-origin:0 0;color:#fff;">153.79</span>
<span style="left:602.6px;top:103.0px;font-size:19.4px;line-height:23px;transform:scaleX(1.260);transform-origin:0 0;color:#fff;">107.08</span>
<span style="left:698.4px;top:103.0px;font-size:19.4px;line-height:23px;transform:scaleX(1.260);transform-origin:0 0;color:#fff;">0.58</span>
<span style="left:774.6px;top:103.0px;font-size:19.4px;line-height:23px;transform:scaleX(1.260);transform-origin:0 0;color:#fff;">31.34</span>
<span style="left:888.2px;top:103.0px;font-size:19.4px;line-height:23px;transform:scaleX(1.260);transform-origin:0 0;color:#fff;">111.06</span>
<span style="left:1004.7px;top:103.0px;font-size:19.4px;line-height:23px;transform:scaleX(1.260);transform-origin:0 0;color:#fff;">59.10</span>
<span style="left:1107.2px;top:103.0px;font-size:19.4px;line-height:23px;transform:scaleX(1.260);transform-origin:0 0;color:#fff;">40.35</span>
<span style="left:1197.0px;top:103.0px;font-size:19.4px;line-height:23px;transform:scaleX(1.260);transform-origin:0 0;color:#fff;">74.91</span>
<span style="left:1337.7px;top:103.0px;font-size:19.4px;line-height:23px;transform:scaleX(1.260);transform-origin:0 0;color:#fff;">130.18</span>
<span style="left:1487.5px;top:103.0px;font-size:19.4px;line-height:23px;transform:scaleX(1.260);transform-origin:0 0;color:#fff;">88.86</span>
<span style="left:1579.2px;top:103.0px;font-size:19.4px;line-height:23px;transform:scaleX(1.260);transform-origin:0 0;color:#fff;">38.37</span>
<span style="left:1733.5px;top:103.0px;font-size:19.4px;line-height:23px;transform:scaleX(1.260);transform-origin:0 0;color:#fff;">59.73</span>
<span style="left:20.0px;top:134.4px;font-size:19.4px;line-height:23px;transform:scaleX(1.315);transform-origin:0 0;color:#e6e6e6;font-weight:bold;">Target x:CIE31</span>
<span style="left:224.5px;top:134.4px;font-size:19.4px;line-height:23px;transform:scaleX(1.260);transform-origin:0 0;color:#e6e6e6;">0.31</span>
<span style="left:314.8px;top:134.4px;font-size:19.4px;line-height:23px;transform:scaleX(1.260);transform-origin:0 0;color:#e6e6e6;">0.31</span>
<span style="left:411.0px;top:134.4px;font-size:19.4px;line-height:23px;transform:scaleX(1.260);transform-origin:0 0;color:#e6e6e6;">0.31</span>
<span style="left:506.4px;top:134.4px;font-size:19.4px;line-height:23px;transform:scaleX(1.260);transform-origin:0 0;color:#e6e6e6;">0.31</span>
<span style="left:602.6px;top:134.4px;font-size:19.4px;line-height:23px;transform:scaleX(1.260);transform-origin:0 0;color:#e6e6e6;">0.31</span>
<span style="left:698.4px;top:134.4px;font-size:19.4px;line-height:23px;transform:scaleX(1.260);transform-origin:0 0;color:#e6e6e6;">0.31</span>
<span style="left:774.6px;top:134.4px;font-size:19.4px;line-height:23px;transform:scaleX(1.260);transform-origin:0 0;color:#e6e6e6;">0.40</span>
<span style="left:888.2px;top:134.4px;font-size:19.4px;line-height:23px;transform:scaleX(1.260);transform-origin:0 0;color:#e6e6e6;">0.38</span>
<span style="left:1004.7px;top:134.4px;font-size:19.4px;line-height:23px;transform:scaleX(1.260);transform-origin:0 0;color:#e6e6e6;">0.25</span>
<span style="left:1107.2px;top:134.4px;font-size:19.4px;line-height:23px;transform:scaleX(1.260);transform-origin:0 0;color:#000;">0.34</span>
<span style="left:1197.0px;top:134.4px;font-size:19.4px;line-height:23px;transform:scaleX(1.260);transform-origin:0 0;color:#e6e6e6;">0.27</span>
<span style="left:1337.7px;top:134.4px;font-size:19.4px;line-height:23px;transform:scaleX(1.260);transform-origin:0 0;color:#e6e6e6;">0.26</span>
<span style="left:1487.5px;top:134.4px;font-size:19.4px;line-height:23px;transform:scaleX(1.260);transform-origin:0 0;color:#e6e6e6;">0.51</span>
<span style="left:1579.2px;top:134.4px;font-size:19.4px;line-height:23px;transform:scaleX(1.260);transform-origin:0 0;color:#e6e6e6;">0.22</span>
<span style="left:1733.5px;top:134.4px;font-size:19.4px;line-height:23px;transform:scaleX(1.260);transform-origin:0 0;color:#e6e6e6;">0.46</span>
<span style="left:20.0px;top:165.9px;font-size:19.4px;line-height:23px;transform:scaleX(1.315);transform-origin:0 0;color:#fff;font-weight:bold;">Target y:CIE31</span>
<span style="left:224.5px;top:165.9px;font-size:19.4px;line-height:23px;transform:scaleX(1.260);transform-origin:0 0;color:#fff;">0.33</span>
<span style="left:314.8px;top:165.9px;font-size:19.4px;line-height:23px;transform:scaleX(1.260);transform-origin:0 0;color:#fff;">0.33</span>
<span style="left:411.0px;top:165.9px;font-size:19.4px;line-height:23px;transform:scaleX(1.260);transform-origin:0 0;color:#fff;">0.33</span>
<span style="left:506.4px;top:165.9px;font-size:19.4px;line-height:23px;transform:scaleX(1.260);transform-origin:0 0;color:#fff;">0.33</span>
<span style="left:602.6px;top:165.9px;font-size:19.4px;line-height:23px;transform:scaleX(1.260);transform-origin:0 0;color:#fff;">0.33</span>
<span style="left:698.4px;top:165.9px;font-size:19.4px;line-height:23px;transform:scaleX(1.260);transform-origin:0 0;color:#fff;">0.33</span>
<span style="left:774.6px;top:165.9px;font-size:19.4px;line-height:23px;transform:scaleX(1.260);transform-origin:0 0;color:#fff;">0.36</span>
<span style="left:888.2px;top:165.9px;font-size:19.4px;line-height:23px;transform:scaleX(1.260);transform-origin:0 0;color:#fff;">0.36</span>
<span style="left:1004.7px;top:165.9px;font-size:19.4px;line-height:23px;transform:scaleX(1.260);transform-origin:0 0;color:#fff;">0.27</span>
<span style="left:1107.2px;top:165.9px;font-size:19.4px;line-height:23px;transform:scaleX(1.260);transform-origin:0 0;color:#fff;">0.43</span>
<span style="left:1197.0px;top:165.9px;font-size:19.4px;line-height:23px;transform:scaleX(1.260);transform-origin:0 0;color:#fff;">0.25</span>
<span style="left:1337.7px;top:165.9px;font-size:19.4px;line-height:23px;transform:scaleX(1.260);transform-origin:0 0;color:#fff;">0.36</span>
<span style="left:1487.5px;top:165.9px;font-size:19.4px;line-height:23px;transform:scaleX(1.260);transform-origin:0 0;color:#fff;">0.41</span>
<span style="left:1579.2px;top:165.9px;font-size:19.4px;line-height:23px;transform:scaleX(1.260);transform-origin:0 0;color:#fff;">0.19</span>
<span style="left:1733.5px;top:165.9px;font-size:19.4px;line-height:23px;transform:scaleX(1.260);transform-origin:0 0;color:#fff;">0.31</span>
<span style="left:20.0px;top:197.5px;font-size:19.4px;line-height:23px;transform:scaleX(1.315);transform-origin:0 0;color:#e6e6e6;font-weight:bold;">Target Y</span>
<span style="left:224.5px;top:197.5px;font-size:19.4px;line-height:23px;transform:scaleX(1.260);transform-origin:0 0;color:#e6e6e6;">315.41</span>
<span style="left:314.8px;top:197.5px;font-size:19.4px;line-height:23px;transform:scaleX(1.260);transform-origin:0 0;color:#e6e6e6;">249.58</span>
<span style="left:411.0px;top:197.5px;font-size:19.4px;line-height:23px;transform:scaleX(1.260);transform-origin:0 0;color:#e6e6e6;">201.10</span>
<span style="left:506.4px;top:197.5px;font-size:19.4px;line-height:23px;transform:scaleX(1.260);transform-origin:0 0;color:#e6e6e6;">154.87</span>
<span style="left:602.6px;top:197.5px;font-size:19.4px;line-height:23px;transform:scaleX(1.260);transform-origin:0 0;color:#e6e6e6;">107.84</span>
<span style="left:698.4px;top:197.5px;font-size:19.4px;line-height:23px;transform:scaleX(1.260);transform-origin:0 0;color:#e6e6e6;">0.00</span>
<span style="left:774.6px;top:197.5px;font-size:19.4px;line-height:23px;transform:scaleX(1.260);transform-origin:0 0;color:#e6e6e6;">31.77</span>
<span style="left:888.2px;top:197.5px;font-size:19.4px;line-height:23px;transform:scaleX(1.260);transform-origin:0 0;color:#e6e6e6;">110.06</span>
<span style="left:1004.7px;top:197.5px;font-size:19.4px;line-height:23px;transform:scaleX(1.260);transform-origin:0 0;color:#e6e6e6;">58.98</span>
<span style="left:1107.2px;top:197.5px;font-size:19.4px;line-height:23px;transform:scaleX(1.260);transform-origin:0 0;color:#e6e6e6;">41.11</span>
<span style="left:1197.0px;top:197.5px;font-size:19.4px;line-height:23px;transform:scaleX(1.260);transform-origin:0 0;color:#e6e6e6;">73.55</span>
<span style="left:1337.7px;top:197.5px;font-size:19.4px;line-height:23px;transform:scaleX(1.260);transform-origin:0 0;color:#e6e6e6;">132.07</span>
<span style="left:1487.5px;top:197.5px;font-size:19.4px;line-height:23px;transform:scaleX(1.260);transform-origin:0 0;color:#e6e6e6;">89.41</span>
<span style="left:1579.2px;top:197.5px;font-size:19.4px;line-height:23px;transform:scaleX(1.260);transform-origin:0 0;color:#e6e6e6;">37.07</span>
<span style="left:1733.5px;top:197.5px;font-size:19.4px;line-height:23px;transform:scaleX(1.260);transform-origin:0 0;color:#e6e6e6;">58.90</span>
<span style="left:20.0px;top:228.8px;font-size:19.4px;line-height:23px;transform:scaleX(1.315);transform-origin:0 0;color:#fff;font-weight:bold;">ΔE 2000</span>
<span style="left:224.5px;top:228.8px;font-size:19.4px;line-height:23px;transform:scaleX(1.260);transform-origin:0 0;color:#fff;">2.44</span>
<span style="left:314.8px;top:228.8px;font-size:19.4px;line-height:23px;transform:scaleX(1.260);transform-origin:0 0;color:#fff;">2.08</span>
<span style="left:411.0px;top:228.8px;font-size:19.4px;line-height:23px;transform:scaleX(1.260);transform-origin:0 0;color:#fff;">1.42</span>
<span style="left:506.4px;top:228.8px;font-size:19.4px;line-height:23px;transform:scaleX(1.260);transform-origin:0 0;color:#fff;">1.62</span>
<span style="left:602.6px;top:228.8px;font-size:19.4px;line-height:23px;transform:scaleX(1.260);transform-origin:0 0;color:#fff;">1.57</span>
<span style="left:698.4px;top:228.8px;font-size:19.4px;line-height:23px;transform:scaleX(1.260);transform-origin:0 0;color:#fff;">1.08</span>
<span style="left:774.6px;top:228.8px;font-size:19.4px;line-height:23px;transform:scaleX(1.260);transform-origin:0 0;color:#fff;">0.28</span>
<span style="left:888.2px;top:228.8px;font-size:19.4px;line-height:23px;transform:scaleX(1.260);transform-origin:0 0;color:#fff;">1.52</span>
<span style="left:1004.7px;top:228.8px;font-size:19.4px;line-height:23px;transform:scaleX(1.260);transform-origin:0 0;color:#fff;">1.20</span>
<span style="left:1107.2px;top:228.8px;font-size:19.4px;line-height:23px;transform:scaleX(1.260);transform-origin:0 0;color:#fff;">0.73</span>
<span style="left:1197.0px;top:228.8px;font-size:19.4px;line-height:23px;transform:scaleX(1.260);transform-origin:0 0;color:#fff;">1.30</span>
<span style="left:1337.7px;top:228.8px;font-size:19.4px;line-height:23px;transform:scaleX(1.260);transform-origin:0 0;color:#fff;">0.58</span>
<span style="left:1487.5px;top:228.8px;font-size:19.4px;line-height:23px;transform:scaleX(1.260);transform-origin:0 0;color:#fff;">0.50</span>
<span style="left:1579.2px;top:228.8px;font-size:19.4px;line-height:23px;transform:scaleX(1.260);transform-origin:0 0;color:#fff;">1.48</span>
<span style="left:1733.5px;top:228.8px;font-size:19.4px;line-height:23px;transform:scaleX(1.260);transform-origin:0 0;color:#fff;">0.60</span>
<span style="left:20.0px;top:260.2px;font-size:19.4px;line-height:23px;transform:scaleX(1.315);transform-origin:0 0;color:#e6e6e6;font-weight:bold;">ΔE ITP</span>
<span style="left:224.5px;top:260.2px;font-size:19.4px;line-height:23px;transform:scaleX(1.260);transform-origin:0 0;color:#e6e6e6;">1.47</span>
<span style="left:314.8px;top:260.2px;font-size:19.4px;line-height:23px;transform:scaleX(1.260);transform-origin:0 0;color:#e6e6e6;">1.55</span>
<span style="left:411.0px;top:260.2px;font-size:19.4px;line-height:23px;transform:scaleX(1.260);transform-origin:0 0;color:#e6e6e6;">1.05</span>
<span style="left:506.4px;top:260.2px;font-size:19.4px;line-height:23px;transform:scaleX(1.260);transform-origin:0 0;color:#e6e6e6;">1.34</span>
<span style="left:602.6px;top:260.2px;font-size:19.4px;line-height:23px;transform:scaleX(1.260);transform-origin:0 0;color:#e6e6e6;">1.38</span>
<span style="left:698.4px;top:260.2px;font-size:19.4px;line-height:23px;transform:scaleX(1.260);transform-origin:0 0;color:#e6e6e6;">89.27</span>
<span style="left:774.6px;top:260.2px;font-size:19.4px;line-height:23px;transform:scaleX(1.260);transform-origin:0 0;color:#e6e6e6;">0.98</span>
<span style="left:888.2px;top:260.2px;font-size:19.4px;line-height:23px;transform:scaleX(1.260);transform-origin:0 0;color:#e6e6e6;">2.01</span>
<span style="left:1004.7px;top:260.2px;font-size:19.4px;line-height:23px;transform:scaleX(1.260);transform-origin:0 0;color:#e6e6e6;">1.54</span>
<span style="left:1107.2px;top:260.2px;font-size:19.4px;line-height:23px;transform:scaleX(1.260);transform-origin:0 0;color:#e6e6e6;">2.29</span>
<span style="left:1197.0px;top:260.2px;font-size:19.4px;line-height:23px;transform:scaleX(1.260);transform-origin:0 0;color:#e6e6e6;">2.66</span>
<span style="left:1337.7px;top:260.2px;font-size:19.4px;line-height:23px;transform:scaleX(1.260);transform-origin:0 0;color:#e6e6e6;">1.84</span>
<span style="left:1487.5px;top:260.2px;font-size:19.4px;line-height:23px;transform:scaleX(1.260);transform-origin:0 0;color:#e6e6e6;">1.83</span>
<span style="left:1579.2px;top:260.2px;font-size:19.4px;line-height:23px;transform:scaleX(1.260);transform-origin:0 0;color:#e6e6e6;">3.80</span>
<span style="left:1733.5px;top:260.2px;font-size:19.4px;line-height:23px;transform:scaleX(1.260);transform-origin:0 0;color:#e6e6e6;">1.96</span>
<div style="left:0;top:285.2px;width:1830px;height:21px;background:#5e5e5e"></div>
<div style="left:28.0px;top:287.5px;width:876px;height:16px;background:#414141;border-radius:8px"></div>
<div style="left:4.0px;top:287.5px;width:17px;height:16px;background:#747474;border-radius:3px"></div><div style="left:1796.0px;top:287.5px;width:17px;height:16px;background:#747474;border-radius:3px"></div>
<svg style="position:absolute;left:8.0px;top:289.5px" width="9" height="12" viewBox="0 0 9 12"><path d="M8.5 0.5v11l-8-5.5z" fill="#2c2c2c"/></svg>
<svg style="position:absolute;left:1800.5px;top:289.5px" width="9" height="12" viewBox="0 0 9 12"><path d="M0.5 0.5v11l8-5.5z" fill="#2c2c2c"/></svg>
</div>
<div style="left:301px;top:1430px;width:1776px;height:98px;overflow:hidden">
<div style="left:0;top:6px;width:1776px;height:73px;background:#3c3c3c"></div>
<div style="left:-18px;top:4.5px;width:75px;height:73.5px;border-radius:7px;background:linear-gradient(#a8a8a8,#8a8a8a 45%,#5a5a5a);border:1px solid #6a6a6a;border-top-color:#9a9a9a"></div>
<div style="left:-10px;top:12.8px;width:59.5px;height:35.5px;border-radius:5px;background:#c29682;box-shadow:inset 0 1.5px 2px rgba(0,0,0,.45),inset 0 -1px 1px rgba(255,255,255,.25)"></div>
<span style="left:-16.5px;top:57.4px;font-size:16.2px;line-height:19px;transform:scaleX(0.920);transform-origin:0 0;color:#262626;font-weight:bold;text-shadow:0 1px 0 rgba(255,255,255,.18);">Light Skin</span>
<div style="left:60px;top:4.5px;width:75px;height:73.5px;border-radius:7px;background:linear-gradient(#a8a8a8,#8a8a8a 45%,#5a5a5a);border:1px solid #6a6a6a;border-top-color:#9a9a9a"></div>
<div style="left:68px;top:12.8px;width:59.5px;height:35.5px;border-radius:5px;background:#5e7b9e;box-shadow:inset 0 1.5px 2px rgba(0,0,0,.45),inset 0 -1px 1px rgba(255,255,255,.25)"></div>
<span style="left:66.0px;top:57.4px;font-size:16.2px;line-height:19px;transform:scaleX(0.920);transform-origin:0 0;color:#262626;font-weight:bold;text-shadow:0 1px 0 rgba(255,255,255,.18);">Blue Sky</span>
<div style="left:138px;top:4.5px;width:75px;height:73.5px;border-radius:7px;background:linear-gradient(#a8a8a8,#8a8a8a 45%,#5a5a5a);border:1px solid #6a6a6a;border-top-color:#9a9a9a"></div>
<div style="left:146px;top:12.8px;width:59.5px;height:35.5px;border-radius:5px;background:#5a6c42;box-shadow:inset 0 1.5px 2px rgba(0,0,0,.45),inset 0 -1px 1px rgba(255,255,255,.25)"></div>
<span style="left:149.4px;top:57.4px;font-size:16.2px;line-height:19px;transform:scaleX(0.920);transform-origin:0 0;color:#262626;font-weight:bold;text-shadow:0 1px 0 rgba(255,255,255,.18);">Foliage</span>
<div style="left:216px;top:4.5px;width:75px;height:73.5px;border-radius:7px;background:linear-gradient(#a8a8a8,#8a8a8a 45%,#5a5a5a);border:1px solid #6a6a6a;border-top-color:#9a9a9a"></div>
<div style="left:224px;top:12.8px;width:59.5px;height:17.5px;border-radius:5px;background:#8580b1;box-shadow:inset 0 1.5px 2px rgba(0,0,0,.45),inset 0 -1px 1px rgba(255,255,255,.25)"></div>
<span style="left:229.5px;top:39.4px;font-size:16.2px;line-height:19px;transform:scaleX(0.920);transform-origin:0 0;color:#262626;font-weight:bold;text-shadow:0 1px 0 rgba(255,255,255,.18);">Blue</span>
<span style="left:229.5px;top:57.4px;font-size:16.2px;line-height:19px;transform:scaleX(0.920);transform-origin:0 0;color:#262626;font-weight:bold;text-shadow:0 1px 0 rgba(255,255,255,.18);">Flower</span>
<div style="left:294px;top:4.5px;width:75px;height:73.5px;border-radius:7px;background:linear-gradient(#a8a8a8,#8a8a8a 45%,#5a5a5a);border:1px solid #6a6a6a;border-top-color:#9a9a9a"></div>
<div style="left:302px;top:12.8px;width:59.5px;height:17.5px;border-radius:5px;background:#64bca9;box-shadow:inset 0 1.5px 2px rgba(0,0,0,.45),inset 0 -1px 1px rgba(255,255,255,.25)"></div>
<span style="left:308.7px;top:39.4px;font-size:16.2px;line-height:19px;transform:scaleX(0.920);transform-origin:0 0;color:#262626;font-weight:bold;text-shadow:0 1px 0 rgba(255,255,255,.18);">Bluish</span>
<span style="left:308.7px;top:57.4px;font-size:16.2px;line-height:19px;transform:scaleX(0.920);transform-origin:0 0;color:#262626;font-weight:bold;text-shadow:0 1px 0 rgba(255,255,255,.18);">Green</span>
<div style="left:372px;top:4.5px;width:75px;height:73.5px;border-radius:7px;background:linear-gradient(#a8a8a8,#8a8a8a 45%,#5a5a5a);border:1px solid #6a6a6a;border-top-color:#9a9a9a"></div>
<div style="left:380px;top:12.8px;width:59.5px;height:35.5px;border-radius:5px;background:#dc7a2a;box-shadow:inset 0 1.5px 2px rgba(0,0,0,.45),inset 0 -1px 1px rgba(255,255,255,.25)"></div>
<span style="left:383.4px;top:57.4px;font-size:16.2px;line-height:19px;transform:scaleX(0.920);transform-origin:0 0;color:#262626;font-weight:bold;text-shadow:0 1px 0 rgba(255,255,255,.18);">Orange</span>
<div style="left:450px;top:4.5px;width:75px;height:73.5px;border-radius:7px;background:linear-gradient(#a8a8a8,#8a8a8a 45%,#5a5a5a);border:1px solid #6a6a6a;border-top-color:#9a9a9a"></div>
<div style="left:458px;top:12.8px;width:59.5px;height:17.5px;border-radius:5px;background:#4a5aa8;box-shadow:inset 0 1.5px 2px rgba(0,0,0,.45),inset 0 -1px 1px rgba(255,255,255,.25)"></div>
<span style="left:457.7px;top:39.4px;font-size:16.2px;line-height:19px;transform:scaleX(0.920);transform-origin:0 0;color:#262626;font-weight:bold;text-shadow:0 1px 0 rgba(255,255,255,.18);">Purplish</span>
<span style="left:457.7px;top:57.4px;font-size:16.2px;line-height:19px;transform:scaleX(0.920);transform-origin:0 0;color:#262626;font-weight:bold;text-shadow:0 1px 0 rgba(255,255,255,.18);">Blue</span>
<div style="left:528px;top:4.5px;width:75px;height:73.5px;border-radius:7px;background:linear-gradient(#a8a8a8,#8a8a8a 45%,#5a5a5a);border:1px solid #6a6a6a;border-top-color:#9a9a9a"></div>
<div style="left:536px;top:12.8px;width:59.5px;height:17.5px;border-radius:5px;background:#c4525f;box-shadow:inset 0 1.5px 2px rgba(0,0,0,.45),inset 0 -1px 1px rgba(255,255,255,.25)"></div>
<span style="left:532.4px;top:39.4px;font-size:16.2px;line-height:19px;transform:scaleX(0.920);transform-origin:0 0;color:#262626;font-weight:bold;text-shadow:0 1px 0 rgba(255,255,255,.18);">Moderate</span>
<span style="left:532.4px;top:57.4px;font-size:16.2px;line-height:19px;transform:scaleX(0.920);transform-origin:0 0;color:#262626;font-weight:bold;text-shadow:0 1px 0 rgba(255,255,255,.18);">Red</span>
<div style="left:606px;top:4.5px;width:75px;height:73.5px;border-radius:7px;background:linear-gradient(#a8a8a8,#8a8a8a 45%,#5a5a5a);border:1px solid #6a6a6a;border-top-color:#9a9a9a"></div>
<div style="left:614px;top:12.8px;width:59.5px;height:35.5px;border-radius:5px;background:#5c3c6e;box-shadow:inset 0 1.5px 2px rgba(0,0,0,.45),inset 0 -1px 1px rgba(255,255,255,.25)"></div>
<span style="left:620.3px;top:57.4px;font-size:16.2px;line-height:19px;transform:scaleX(0.920);transform-origin:0 0;color:#262626;font-weight:bold;text-shadow:0 1px 0 rgba(255,255,255,.18);">Purple</span>
<div style="left:684px;top:4.5px;width:75px;height:73.5px;border-radius:7px;background:linear-gradient(#a8a8a8,#8a8a8a 45%,#5a5a5a);border:1px solid #6a6a6a;border-top-color:#9a9a9a"></div>
<div style="left:692px;top:12.8px;width:59.5px;height:17.5px;border-radius:5px;background:#a0bd3e;box-shadow:inset 0 1.5px 2px rgba(0,0,0,.45),inset 0 -1px 1px rgba(255,255,255,.25)"></div>
<span style="left:698.3px;top:39.4px;font-size:16.2px;line-height:19px;transform:scaleX(0.920);transform-origin:0 0;color:#262626;font-weight:bold;text-shadow:0 1px 0 rgba(255,255,255,.18);">Yellow</span>
<span style="left:698.3px;top:57.4px;font-size:16.2px;line-height:19px;transform:scaleX(0.920);transform-origin:0 0;color:#262626;font-weight:bold;text-shadow:0 1px 0 rgba(255,255,255,.18);">Green</span>
<div style="left:762px;top:4.5px;width:75px;height:73.5px;border-radius:7px;background:linear-gradient(#a8a8a8,#8a8a8a 45%,#5a5a5a);border:1px solid #6a6a6a;border-top-color:#9a9a9a"></div>
<div style="left:770px;top:12.8px;width:59.5px;height:17.5px;border-radius:5px;background:#e6a42e;box-shadow:inset 0 1.5px 2px rgba(0,0,0,.45),inset 0 -1px 1px rgba(255,255,255,.25)"></div>
<span style="left:773.4px;top:39.4px;font-size:16.2px;line-height:19px;transform:scaleX(0.920);transform-origin:0 0;color:#262626;font-weight:bold;text-shadow:0 1px 0 rgba(255,255,255,.18);">Orange</span>
<span style="left:773.4px;top:57.4px;font-size:16.2px;line-height:19px;transform:scaleX(0.920);transform-origin:0 0;color:#262626;font-weight:bold;text-shadow:0 1px 0 rgba(255,255,255,.18);">Yellow</span>
<div style="left:840px;top:4.5px;width:75px;height:73.5px;border-radius:7px;background:linear-gradient(#a8a8a8,#8a8a8a 45%,#5a5a5a);border:1px solid #6a6a6a;border-top-color:#9a9a9a"></div>
<div style="left:848px;top:12.8px;width:59.5px;height:35.5px;border-radius:5px;background:#323a9a;box-shadow:inset 0 1.5px 2px rgba(0,0,0,.45),inset 0 -1px 1px rgba(255,255,255,.25)"></div>
<span style="left:861.4px;top:57.4px;font-size:16.2px;line-height:19px;transform:scaleX(0.920);transform-origin:0 0;color:#262626;font-weight:bold;text-shadow:0 1px 0 rgba(255,255,255,.18);">Blue</span>
<div style="left:918px;top:4.5px;width:75px;height:73.5px;border-radius:7px;background:linear-gradient(#a8a8a8,#8a8a8a 45%,#5a5a5a);border:1px solid #6a6a6a;border-top-color:#9a9a9a"></div>
<div style="left:926px;top:12.8px;width:59.5px;height:35.5px;border-radius:5px;background:#489648;box-shadow:inset 0 1.5px 2px rgba(0,0,0,.45),inset 0 -1px 1px rgba(255,255,255,.25)"></div>
<span style="left:934.0px;top:57.4px;font-size:16.2px;line-height:19px;transform:scaleX(0.920);transform-origin:0 0;color:#262626;font-weight:bold;text-shadow:0 1px 0 rgba(255,255,255,.18);">Green</span>
<div style="left:996px;top:4.5px;width:75px;height:73.5px;border-radius:7px;background:linear-gradient(#a8a8a8,#8a8a8a 45%,#5a5a5a);border:1px solid #6a6a6a;border-top-color:#9a9a9a"></div>
<div style="left:1004px;top:12.8px;width:59.5px;height:35.5px;border-radius:5px;background:#b03239;box-shadow:inset 0 1.5px 2px rgba(0,0,0,.45),inset 0 -1px 1px rgba(255,255,255,.25)"></div>
<span style="left:1019.4px;top:57.4px;font-size:16.2px;line-height:19px;transform:scaleX(0.920);transform-origin:0 0;color:#262626;font-weight:bold;text-shadow:0 1px 0 rgba(255,255,255,.18);">Red</span>
<div style="left:1074px;top:4.5px;width:75px;height:73.5px;border-radius:7px;background:linear-gradient(#a8a8a8,#8a8a8a 45%,#5a5a5a);border:1px solid #6a6a6a;border-top-color:#9a9a9a"></div>
<div style="left:1082px;top:12.8px;width:59.5px;height:35.5px;border-radius:5px;background:#ecc820;box-shadow:inset 0 1.5px 2px rgba(0,0,0,.45),inset 0 -1px 1px rgba(255,255,255,.25)"></div>
<span style="left:1088.3px;top:57.4px;font-size:16.2px;line-height:19px;transform:scaleX(0.920);transform-origin:0 0;color:#262626;font-weight:bold;text-shadow:0 1px 0 rgba(255,255,255,.18);">Yellow</span>
<div style="left:1152px;top:4.5px;width:75px;height:73.5px;border-radius:7px;background:linear-gradient(#a8a8a8,#8a8a8a 45%,#5a5a5a);border:1px solid #6a6a6a;border-top-color:#9a9a9a"></div>
<div style="left:1160px;top:12.8px;width:59.5px;height:35.5px;border-radius:5px;background:#bc5597;box-shadow:inset 0 1.5px 2px rgba(0,0,0,.45),inset 0 -1px 1px rgba(255,255,255,.25)"></div>
<span style="left:1159.3px;top:57.4px;font-size:16.2px;line-height:19px;transform:scaleX(0.920);transform-origin:0 0;color:#262626;font-weight:bold;text-shadow:0 1px 0 rgba(255,255,255,.18);">Magenta</span>
<div style="left:1230px;top:4.5px;width:75px;height:73.5px;border-radius:7px;background:linear-gradient(#a8a8a8,#8a8a8a 45%,#5a5a5a);border:1px solid #6a6a6a;border-top-color:#9a9a9a"></div>
<div style="left:1238px;top:12.8px;width:59.5px;height:35.5px;border-radius:5px;background:#0887a6;box-shadow:inset 0 1.5px 2px rgba(0,0,0,.45),inset 0 -1px 1px rgba(255,255,255,.25)"></div>
<span style="left:1249.3px;top:57.4px;font-size:16.2px;line-height:19px;transform:scaleX(0.920);transform-origin:0 0;color:#262626;font-weight:bold;text-shadow:0 1px 0 rgba(255,255,255,.18);">Cyan</span>
<div style="left:1308px;top:4.5px;width:75px;height:73.5px;border-radius:7px;background:linear-gradient(#a8a8a8,#8a8a8a 45%,#5a5a5a);border:1px solid #6a6a6a;border-top-color:#9a9a9a"></div>
<div style="left:1316px;top:12.8px;width:59.5px;height:35.5px;border-radius:5px;background:#ff0000;box-shadow:inset 0 1.5px 2px rgba(0,0,0,.45),inset 0 -1px 1px rgba(255,255,255,.25)"></div>
<span style="left:1310.3px;top:57.4px;font-size:16.2px;line-height:19px;transform:scaleX(0.920);transform-origin:0 0;color:#262626;font-weight:bold;text-shadow:0 1px 0 rgba(255,255,255,.18);">100% Red</span>
<div style="left:1386px;top:4.5px;width:75px;height:73.5px;border-radius:7px;background:linear-gradient(#a8a8a8,#8a8a8a 45%,#5a5a5a);border:1px solid #6a6a6a;border-top-color:#9a9a9a"></div>
<div style="left:1394px;top:12.8px;width:59.5px;height:17.5px;border-radius:5px;background:#00ff00;box-shadow:inset 0 1.5px 2px rgba(0,0,0,.45),inset 0 -1px 1px rgba(255,255,255,.25)"></div>
<span style="left:1402.0px;top:39.4px;font-size:16.2px;line-height:19px;transform:scaleX(0.920);transform-origin:0 0;color:#262626;font-weight:bold;text-shadow:0 1px 0 rgba(255,255,255,.18);">100%</span>
<span style="left:1402.0px;top:57.4px;font-size:16.2px;line-height:19px;transform:scaleX(0.920);transform-origin:0 0;color:#262626;font-weight:bold;text-shadow:0 1px 0 rgba(255,255,255,.18);">Green</span>
<div style="left:1464px;top:4.5px;width:75px;height:73.5px;border-radius:7px;background:linear-gradient(#a8a8a8,#8a8a8a 45%,#5a5a5a);border:1px solid #6a6a6a;border-top-color:#9a9a9a"></div>
<div style="left:1472px;top:12.8px;width:59.5px;height:17.5px;border-radius:5px;background:#0000ff;box-shadow:inset 0 1.5px 2px rgba(0,0,0,.45),inset 0 -1px 1px rgba(255,255,255,.25)"></div>
<span style="left:1482.4px;top:39.4px;font-size:16.2px;line-height:19px;transform:scaleX(0.920);transform-origin:0 0;color:#262626;font-weight:bold;text-shadow:0 1px 0 rgba(255,255,255,.18);">100%</span>
<span style="left:1482.4px;top:57.4px;font-size:16.2px;line-height:19px;transform:scaleX(0.920);transform-origin:0 0;color:#262626;font-weight:bold;text-shadow:0 1px 0 rgba(255,255,255,.18);">Blue</span>
<div style="left:1542px;top:4.5px;width:75px;height:73.5px;border-radius:7px;background:linear-gradient(#a8a8a8,#8a8a8a 45%,#5a5a5a);border:1px solid #6a6a6a;border-top-color:#9a9a9a"></div>
<div style="left:1550px;top:12.8px;width:59.5px;height:17.5px;border-radius:5px;background:#00ffff;box-shadow:inset 0 1.5px 2px rgba(0,0,0,.45),inset 0 -1px 1px rgba(255,255,255,.25)"></div>
<span style="left:1560.4px;top:39.4px;font-size:16.2px;line-height:19px;transform:scaleX(0.920);transform-origin:0 0;color:#262626;font-weight:bold;text-shadow:0 1px 0 rgba(255,255,255,.18);">100%</span>
<span style="left:1560.4px;top:57.4px;font-size:16.2px;line-height:19px;transform:scaleX(0.920);transform-origin:0 0;color:#262626;font-weight:bold;text-shadow:0 1px 0 rgba(255,255,255,.18);">Cyan</span>
<div style="left:1620px;top:4.5px;width:75px;height:73.5px;border-radius:7px;background:linear-gradient(#a8a8a8,#8a8a8a 45%,#5a5a5a);border:1px solid #6a6a6a;border-top-color:#9a9a9a"></div>
<div style="left:1628px;top:12.8px;width:59.5px;height:17.5px;border-radius:5px;background:#ff00ff;box-shadow:inset 0 1.5px 2px rgba(0,0,0,.45),inset 0 -1px 1px rgba(255,255,255,.25)"></div>
<span style="left:1627.3px;top:39.4px;font-size:16.2px;line-height:19px;transform:scaleX(0.920);transform-origin:0 0;color:#262626;font-weight:bold;text-shadow:0 1px 0 rgba(255,255,255,.18);">100%</span>
<span style="left:1627.3px;top:57.4px;font-size:16.2px;line-height:19px;transform:scaleX(0.920);transform-origin:0 0;color:#262626;font-weight:bold;text-shadow:0 1px 0 rgba(255,255,255,.18);">Magenta</span>
<div style="left:1698px;top:4.5px;width:75px;height:73.5px;border-radius:7px;background:linear-gradient(#1a1a1a,#242424 30%,#2c2c2c 65%,#2a2a2a);border:1px solid #1c1c1c;border-top-color:#333"></div>
<div style="left:1706px;top:12.8px;width:59.5px;height:17.5px;border-radius:5px;background:#ffff00;box-shadow:inset 0 1.5px 2px rgba(0,0,0,.45),inset 0 -1px 1px rgba(255,255,255,.25)"></div>
<span style="left:1712.3px;top:39.4px;font-size:16.2px;line-height:19px;transform:scaleX(0.920);transform-origin:0 0;color:#fff;font-weight:bold;">100%</span>
<span style="left:1712.3px;top:57.4px;font-size:16.2px;line-height:19px;transform:scaleX(0.920);transform-origin:0 0;color:#fff;font-weight:bold;">Yellow</span>
<div style="left:0;top:78.5px;width:1776px;height:19.5px;background:#5e5e5e"></div>
<div style="left:439px;top:80.5px;width:1312px;height:16px;background:#454545;border-radius:8px"></div>
<div style="left:2px;top:80px;width:16px;height:15.5px;background:#808080;border-radius:3px"></div><div style="left:1756px;top:80px;width:16px;height:15.5px;background:#808080;border-radius:3px"></div>
<svg style="position:absolute;left:5.5px;top:82px" width="9" height="12" viewBox="0 0 9 12"><path d="M8.5 0.5v11l-8-5.5z" fill="#2c2c2c"/></svg>
<svg style="position:absolute;left:1760px;top:82px" width="9" height="12" viewBox="0 0 9 12"><path d="M0.5 0.5v11l8-5.5z" fill="#2c2c2c"/></svg>
</div>
<div style="left:2075.5px;top:1435px;width:72px;height:91px;border-radius:7px;background:linear-gradient(#a0a0a0,#8a8a8a 28.5%,#3c3c3c 29.5%,#3c3c3c 30.5%,#828282 31.5%,#707070 65%,#585858);border:1px solid #666"></div>
<div style="left:2100px;top:1438px;width:23px;height:23px;border-radius:12px;background:linear-gradient(#6a6a6a,#9a9a9a)"></div>
<svg style="position:absolute;left:2104.5px;top:1444.5px" width="14" height="8" viewBox="0 0 14 8"><path d="M0.5 7.5h13l-6.5-7z" fill="#333"/></svg>
<div style="left:2088px;top:1471px;width:47px;height:47px;border-radius:7px;background:linear-gradient(#a8a8a8,#a2a2a2 50%,#8a8a8a 52%,#8e8e8e);border:3.5px solid #2a2a2a;box-shadow:0 0 0 1px #555"></div>
<div style="left:2101px;top:1484px;width:21px;height:21px;background:linear-gradient(#222,#111 50%,#000 52%)"></div>
<div style="left:2149px;top:1435px;width:69.4px;height:45.5px;background:linear-gradient(#a8a8a8,#8e8e8e 50%,#6c6c6c);border-radius:7px 0 0 0;border-right:1.5px solid #3c3c3c;border-bottom:1.5px solid #2e2e2e"></div>
<div style="left:2169.7px;top:1441.5px;width:28px;height:28px;border-radius:14px;background:linear-gradient(#666,#a6a6a6)"></div>
<div style="left:2218.4px;top:1435px;width:67.6px;height:45.5px;background:linear-gradient(#a8a8a8,#8e8e8e 50%,#6c6c6c);border-radius:0;border-right:1.5px solid #3c3c3c;border-bottom:1.5px solid #2e2e2e"></div>
<div style="left:2238.2px;top:1441.5px;width:28px;height:28px;border-radius:14px;background:linear-gradient(#666,#a6a6a6)"></div>
<div style="left:2286px;top:1435px;width:67.6px;height:45.5px;background:linear-gradient(#a8a8a8,#8e8e8e 50%,#6c6c6c);border-radius:0;border-right:1.5px solid #3c3c3c;border-bottom:1.5px solid #2e2e2e"></div>
<div style="left:2305.8px;top:1441.5px;width:28px;height:28px;border-radius:14px;background:linear-gradient(#666,#a6a6a6)"></div>
<div style="left:2353.6px;top:1435px;width:66.8px;height:45.5px;background:linear-gradient(#a8a8a8,#8e8e8e 50%,#6c6c6c);border-radius:0;border-right:1.5px solid #3c3c3c;border-bottom:1.5px solid #2e2e2e"></div>
<div style="left:2373.0px;top:1441.5px;width:28px;height:28px;border-radius:14px;background:linear-gradient(#666,#a6a6a6)"></div>
<div style="left:2420.4px;top:1435px;width:68.4px;height:45.5px;background:linear-gradient(#424242,#3a3a3a);border-radius:0;border-right:1.5px solid #3c3c3c;border-bottom:1.5px solid #2e2e2e"></div>
<div style="left:2440.6px;top:1441.5px;width:28px;height:28px;border-radius:14px;background:linear-gradient(#2a2a2a,#484848)"></div>
<div style="left:2488.8px;top:1435px;width:68.2px;height:45.5px;background:linear-gradient(#a8a8a8,#8e8e8e 50%,#6c6c6c);border-radius:0 7px 0 0;border-right:1.5px solid #3c3c3c;border-bottom:1.5px solid #2e2e2e"></div>
<div style="left:2508.9px;top:1441.5px;width:28px;height:28px;border-radius:14px;background:linear-gradient(#666,#a6a6a6)"></div>
<svg style="position:absolute;left:2149px;top:1435px" width="408" height="45" viewBox="0 0 408 45" fill="#2a2a2a"><rect x="29.5" y="15.5" width="10" height="10"/><path d="M98 13.5l12 7.5-12 7.5z"/><path d="M165.5 14v12h11v-12" fill="none" stroke="#2a2a2a" stroke-width="2"/><path d="M168 20h6" stroke="#2a2a2a" stroke-width="1.5"/><path d="M238 21c-2-5-9-5-9 0s7 5 9 0 9-5 9 0-7 5-9 0z" fill="none" stroke="#2a2a2a" stroke-width="2"/><path d="M311.5 20.5a6.5 6.5 0 1 1 -2.5-5" fill="none" stroke="#161616" stroke-width="2.6"/><path d="M312.5 11v7.5h-7.5z" fill="#161616"/></svg>
<div style="left:2149px;top:1481px;width:204.6px;height:45px;background:linear-gradient(#aaa,#909090 50%,#6a6a6a);border-radius:0 0 0 7px;border-right:1.5px solid #3c3c3c"></div>
<div style="left:2353.6px;top:1481px;width:203.4px;height:45px;background:linear-gradient(#aaa,#909090 50%,#6a6a6a);border-radius:0 0 7px 0"></div>
<div style="left:2180.8px;top:1489.6px;width:29px;height:29px;border-radius:15px;background:linear-gradient(#666,#a6a6a6)"></div>
<div style="left:2502.3px;top:1489.6px;width:29px;height:29px;border-radius:15px;background:linear-gradient(#666,#a6a6a6)"></div>
<span style="left:2188.9px;top:1489.0px;font-size:23px;line-height:28px;color:#2e2e2e;">«</span>
<span style="left:2510.4px;top:1489.0px;font-size:23px;line-height:28px;color:#2e2e2e;">»</span>
<span style="left:2236.5px;top:1483.7px;font-size:33.5px;line-height:40px;letter-spacing:-0.09px;color:#2a2a2a;">Back</span>
<span style="left:2396.5px;top:1483.7px;font-size:33.5px;line-height:40px;letter-spacing:2.31px;color:#2a2a2a;">Next</span>
<svg style="position:absolute;left:2150px;top:1425px" width="410" height="103" viewBox="0 0 410 103">
<g fill="none" stroke-linejoin="round" stroke-linecap="round"><path d="M25.5 21.5L78 33l-1.5 25.5L30 66.5zM27 66l-1 6.5 31 13.5 55.5-17-29-6.5" stroke="#e0e0e0" stroke-opacity=".45" stroke-width="7.5"/>
<path d="M25.5 21.5L78 33l-1.5 25.5L30 66.5zM27 66l-1 6.5 31 13.5 55.5-17-29-6.5" stroke="#8e2830" stroke-opacity=".85" stroke-width="4.6"/>
<path d="M35.5 33.5l19 21L82 20" stroke="#e0e0e0" stroke-opacity=".4" stroke-width="8"/><path d="M35.5 33.5l19 21L82 20" stroke="#383838" stroke-opacity=".9" stroke-width="5"/></g>
<text x="83" y="58.5" font-family="Liberation Sans,sans-serif" font-weight="bold" font-size="35.5" textLength="198" lengthAdjust="spacingAndGlyphs" fill="#8e2830" fill-opacity=".86" stroke="#8e2830" stroke-opacity=".86" stroke-width="1.3">NOTEBOOK</text>
<text x="282.5" y="58.5" font-family="Liberation Sans,sans-serif" font-size="35.5" textLength="117" lengthAdjust="spacingAndGlyphs" fill="#2a2a2a" fill-opacity=".9" stroke="#e8e8e8" stroke-opacity=".5" stroke-width="1.6" style="paint-order:stroke">CHECK</text></svg>
<div style="left:2552px;top:87px;width:8px;height:1441px;background:linear-gradient(90deg,rgba(14,14,14,0),#161616 60%,#0e0e0e)"></div>
</body></html>
